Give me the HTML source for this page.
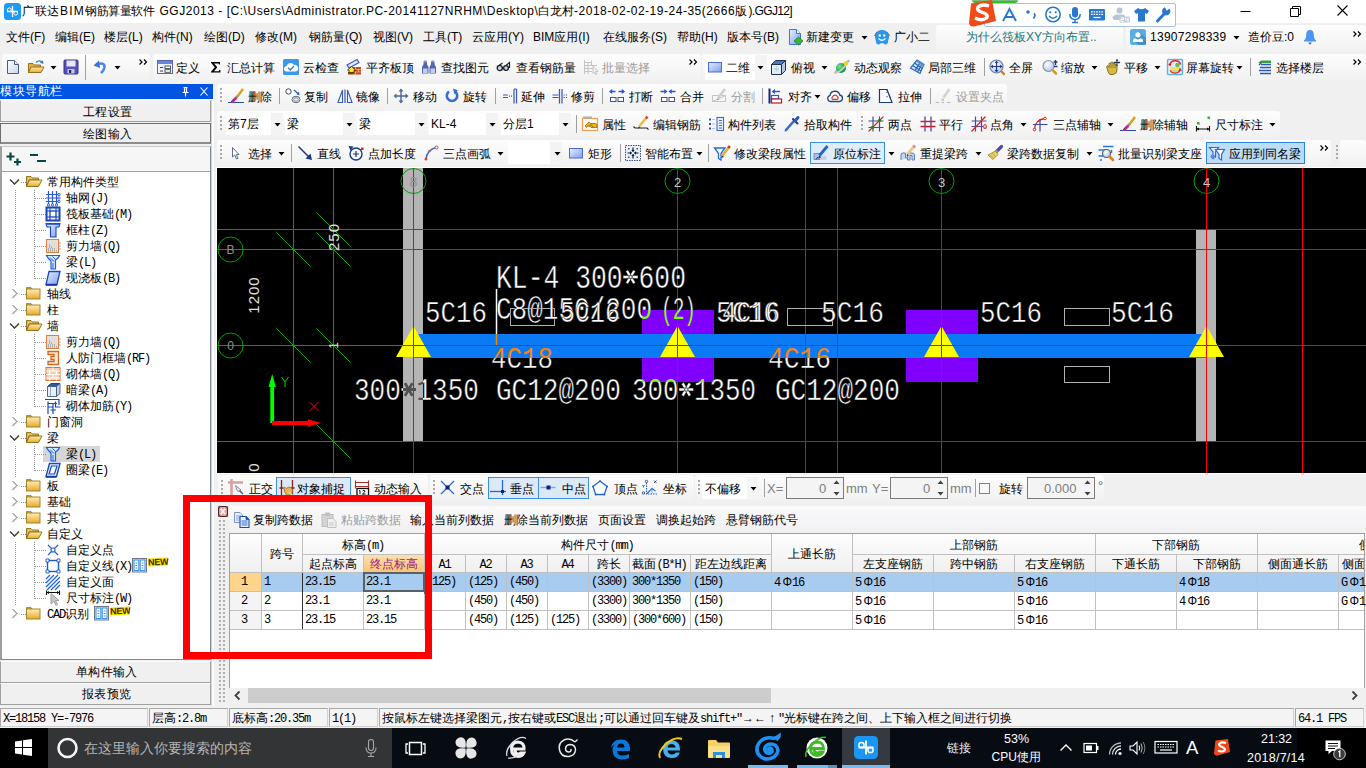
<!DOCTYPE html>
<html><head><meta charset="utf-8"><title>GGJ2013</title><style>
html,body{margin:0;padding:0}
body{width:1366px;height:768px;overflow:hidden;position:relative;background:#f0f0f0;font-family:"Liberation Sans",sans-serif;font-size:12px;color:#000}
.a{position:absolute;box-sizing:border-box}
.t{position:absolute;white-space:nowrap;font-size:12px;line-height:16px;color:#000}
.s{position:absolute;white-space:nowrap;font-size:12px;line-height:16px;color:#000;font-family:"Liberation Sans",sans-serif}
.m{position:absolute;white-space:nowrap;font-size:12px;line-height:16px;color:#000;font-family:"Liberation Mono",monospace;letter-spacing:-1.2px}
.c{position:absolute;white-space:nowrap;color:#fff;font-family:"Liberation Mono",monospace;transform-origin:0 0;line-height:1}
svg{overflow:visible}
i{display:inline-block;font-style:normal;white-space:nowrap}
.s b{font-weight:normal;font-family:"Liberation Mono",monospace;font-size:12px;letter-spacing:-1.2px}
</style></head><body>
<svg width="0" height="0" style="position:absolute"><defs>
<linearGradient id="gb" x1="0" y1="0" x2="1" y2="1"><stop offset="0" stop-color="#e8f0ff"/><stop offset="1" stop-color="#7c9cf0"/></linearGradient>
<linearGradient id="gp" x1="0" y1="0" x2="1" y2="1"><stop offset="0" stop-color="#ffffff"/><stop offset="1" stop-color="#c8d4ec"/></linearGradient>
<linearGradient id="gf" x1="0" y1="0" x2="0" y2="1"><stop offset="0" stop-color="#fff0b0"/><stop offset="1" stop-color="#e8a830"/></linearGradient>
<radialGradient id="gl" cx="0.4" cy="0.35" r="0.7"><stop offset="0" stop-color="#ffffff"/><stop offset="1" stop-color="#a8c4f0"/></radialGradient>
<radialGradient id="gg" cx="0.35" cy="0.35" r="0.7"><stop offset="0" stop-color="#70e890"/><stop offset="1" stop-color="#108838"/></radialGradient>
</defs></svg>
<div class="a" style="left:0px;top:0px;width:1366px;height:23px;background:#fff"></div>
<svg class="a" style="left:4px;top:3px" width="17" height="17" viewBox="0 0 17 17"><rect x="0" y="0" width="17" height="17" rx="3.5" fill="#1a9bfc"/><path d="M8.5 3V14M3 8.5H14" stroke="#fff" stroke-width="1.3" fill="none"/><circle cx="5.3" cy="6.8" r="1.9" fill="none" stroke="#fff" stroke-width="1"/><circle cx="11.7" cy="10.2" r="1.9" fill="none" stroke="#fff" stroke-width="1"/></svg>
<span class="t" style="left:22px;top:3px;letter-spacing:0.5px"><i style="width:36px">广联达</i></span>
<span class="t" style="left:60px;top:3px;;letter-spacing:1.22px">BIM</span>
<span class="t" style="left:85px;top:3px;letter-spacing:-0.4px"><i style="width:72px">钢筋算量软件</i></span>
<span class="t" style="left:159.5px;top:3px;;letter-spacing:0.52px">GGJ2013 - [C:\Users\Administrator.PC-20141127NRHM\Desktop\</span>
<span class="t" style="left:538px;top:3px;"><i style="width:36px">白龙村</i></span>
<span class="t" style="left:574px;top:3px;;letter-spacing:0.52px">-2018-02-02-19-24-35(2666</span>
<span class="t" style="left:735px;top:3px;"><i style="width:12px">版</i></span>
<span class="t" style="left:748.5px;top:3px;;letter-spacing:-0.65px">).GGJ12]</span>
<svg class="a" style="left:1235px;top:0" width="131" height="23" viewBox="0 0 131 23"><path d="M5.5 11.5H15.5" stroke="#000" stroke-width="1" fill="none"/><path d="M55.5 8.5H63.5V16.5H55.5Z M57.5 8.5V6.5H65.5V14.5H63.5" stroke="#000" stroke-width="1" fill="none"/><path d="M102.5 5.5L112.5 15.5M112.5 5.5L102.5 15.5" stroke="#000" stroke-width="1.1" fill="none"/></svg>
<div class="a" style="left:0px;top:23px;width:1366px;height:30px;background:#f0f0f0"></div>
<span class="t" style="left:6px;top:29px;"><i style="width:24px">文件</i>(F)</span>
<span class="t" style="left:55px;top:29px;"><i style="width:24px">编辑</i>(E)</span>
<span class="t" style="left:104px;top:29px;"><i style="width:24px">楼层</i>(L)</span>
<span class="t" style="left:152px;top:29px;"><i style="width:24px">构件</i>(N)</span>
<span class="t" style="left:204px;top:29px;"><i style="width:24px">绘图</i>(D)</span>
<span class="t" style="left:255px;top:29px;"><i style="width:24px">修改</i>(M)</span>
<span class="t" style="left:309px;top:29px;"><i style="width:36px">钢筋量</i>(Q)</span>
<span class="t" style="left:373px;top:29px;"><i style="width:24px">视图</i>(V)</span>
<span class="t" style="left:423px;top:29px;"><i style="width:24px">工具</i>(T)</span>
<span class="t" style="left:472px;top:29px;"><i style="width:36px">云应用</i>(Y)</span>
<span class="t" style="left:533px;top:29px;">BIM<i style="width:24px">应用</i>(I)</span>
<span class="t" style="left:603px;top:29px;"><i style="width:48px">在线服务</i>(S)</span>
<span class="t" style="left:677px;top:29px;"><i style="width:24px">帮助</i>(H)</span>
<span class="t" style="left:727px;top:29px;"><i style="width:36px">版本号</i>(B)</span>
<svg class="a" style="left:788px;top:29px" width="16" height="16" viewBox="0 0 16 16"><path d="M1.5 0.5H8.5L12.5 4.5V15.5H1.5Z" fill="url(#gb)" stroke="#3a78d8"/><path d="M8.5 0.5V4.5H12.5" fill="#fff" stroke="#3a78d8"/><path d="M10.5 8L15 12L10.5 16L6 12Z" fill="#38b838" stroke="#208020" stroke-width="0.8"/></svg>
<span class="t" style="left:806px;top:29px;"><i style="width:48px">新建变更</i></span>
<svg class="a" style="left:861px;top:36px" width="7" height="4" viewBox="0 0 7 4"><path d="M0.5 0H6.5L3.5 3.5Z" fill="#000"/></svg>
<svg class="a" style="left:874px;top:29px" width="16" height="16" viewBox="0 0 16 16"><path d="M8 1C12 1 15 3.5 15 7.5C15 10 14 11 14 12.5C14 14.5 13 15.5 11.5 15.5C10 15.5 10 14 8 14C6 14 6 15.5 4.5 15.5C3 15.5 2 14.5 2 12.5C2 11 1 10 1 7.5C1 3.5 4 1 8 1Z" fill="#2a96ee"/><path d="M0.5 7Q1.5 4 3 3.5M15.5 7Q14.5 4 13 3.5" stroke="#606870" stroke-width="1" fill="none"/><circle cx="5.8" cy="6.5" r="1.2" fill="#fff"/><circle cx="10.2" cy="6.5" r="1.2" fill="#fff"/><path d="M4.5 9.5Q8 13 11.5 9.5" stroke="#fff" stroke-width="1.2" fill="none"/></svg>
<span class="t" style="left:894px;top:29px;"><i style="width:36px">广小二</i></span>
<div class="a" style="left:936px;top:25px;width:187px;height:27px;background:linear-gradient(#fdfdfd,#f1f1f1);border-radius:3px"></div>
<div class="a" style="left:1126px;top:25px;width:240px;height:27px;background:linear-gradient(#fdfdfd,#f1f1f1);border-radius:3px"></div>
<span class="t" style="left:966px;top:29px;color:#167a80"><i style="width:60px">为什么筏板</i>XY<i style="width:48px">方向布置</i>..</span>
<svg class="a" style="left:1130px;top:29px" width="16" height="16" viewBox="0 0 16 16"><rect x="0" y="0" width="16" height="16" rx="2.5" fill="#5aaee4"/><path d="M7 9L16 16V12Z" fill="#3a88c4"/><path d="M9 2L16 9V13.5A2.5 2.5 0 0 1 13.5 16H9L4 12Z" fill="#3f8cc8" opacity="0.8"/><circle cx="8" cy="5.8" r="2.6" fill="#fff"/><path d="M3 13V11.5Q3 9.5 5.5 9.3Q8 11.5 10.5 9.3Q13 9.5 13 11.5V13Z" fill="#fff"/></svg>
<span class="t" style="left:1150px;top:29px;;letter-spacing:0.28px">13907298339</span>
<svg class="a" style="left:1233px;top:36px" width="7" height="4" viewBox="0 0 7 4"><path d="M0.5 0H6.5L3.5 3.5Z" fill="#000"/></svg>
<span class="t" style="left:1248px;top:29px;"><i style="width:36px">造价豆</i>:0</span>
<svg class="a" style="left:1302px;top:29px" width="16" height="16" viewBox="0 0 16 16"><path d="M8 1C10.8 1 11.8 3.2 11.8 6C11.8 9 12.5 10 14 11.5V12.5H2V11.5C3.5 10 4.2 9 4.2 6C4.2 3.2 5.2 1 8 1Z" fill="#4a94f4"/><path d="M6 13.5H10L8 15.8Z" fill="#2a70d8"/></svg>
<svg class="a" style="left:1353px;top:31px" width="9" height="6" viewBox="0 0 9 6"><path d="M0.5 0.5L3 3L0.5 5.5M5 0.5L7.5 3L5 5.5" stroke="#000" stroke-width="1.2" fill="none"/></svg>
<div class="a" style="left:984px;top:3px;width:192px;height:24px;background:#fff;border:1px solid #aac0dc;border-radius:2px"></div>
<svg class="a" style="left:0;top:0" width="1366" height="30" viewBox="0 0 1366 30"><path d="M972 0Q972 3.5 977 3.5H1013Q1018 3.5 1018 0Z" fill="#30c030" stroke="#c0c0c0" stroke-width="1"/><path d="M971 3.5L992 0L996 21L974 26.5Q969.5 27 969 23Z" fill="#f04a18"/><path d="M989 6Q982 3.5 978 7Q976 10.5 982.5 12.5Q989 14.5 986.5 18Q982 21.5 975 18" stroke="#fff" stroke-width="3.4" fill="none"/><path d="M1003 21L1009.5 9L1016 21M1005.5 17H1013.5" stroke="#2878d0" stroke-width="1.9" fill="none"/><circle cx="1028" cy="12" r="1.8" fill="#2878d0"/><path d="M1034 13.5Q1036 15 1033.5 18.5" stroke="#2878d0" stroke-width="1.8" fill="none"/><circle cx="1053" cy="14.5" r="7.2" fill="none" stroke="#2878d0" stroke-width="1.6"/><circle cx="1050.3" cy="12.3" r="1.1" fill="#2878d0"/><circle cx="1055.7" cy="12.3" r="1.1" fill="#2878d0"/><path d="M1049 16Q1053 20.5 1057 16" stroke="#2878d0" stroke-width="1.4" fill="none"/><rect x="1072" y="7" width="6" height="10.5" rx="3" fill="#2878d0"/><path d="M1069.8 14Q1070 19.5 1075 19.5Q1080 19.5 1080.2 14M1075 19.5V22.5M1072 22.5H1078" stroke="#2878d0" stroke-width="1.5" fill="none"/><rect x="1089" y="9" width="16" height="11.5" rx="1.2" fill="#2878d0"/><path d="M1091 11.8H1103M1091 14.3H1103" stroke="#fff" stroke-width="1.3" stroke-dasharray="1.6 1"/><path d="M1093.5 17.5H1100.5" stroke="#fff" stroke-width="1.3"/><circle cx="1119.5" cy="10.5" r="3" fill="#b8c4d4"/><path d="M1113.5 20V18Q1113.5 14.5 1117 14.5H1122Q1125.5 14.5 1125.5 18V20Z" fill="#b8c4d4"/><path d="M1112 17.5L1115 15V20Z" fill="#b8c4d4"/><rect x="1119.5" y="16.5" width="10.5" height="6" rx="1" fill="#c4ccd8"/><path d="M1121 18H1123.5V19.5H1121V21.5H1124M1125.5 17.5V20H1128.5M1128 17.5V22" stroke="#fff" stroke-width="0.9" fill="none"/><path d="M1138 8L1134 11L1136 14L1138 13V21.5H1145V13L1147 14L1149 11L1145 8Q1141.5 10.5 1138 8Z" fill="#2878d0"/><path d="M1157.5 21L1165.5 12.5" stroke="#2878d0" stroke-width="3" stroke-linecap="round"/><path d="M1169.5 8.5A4.2 4.2 0 1 1 1164.8 7.2L1166.8 10.8L1169.5 8.5Z" fill="#2878d0"/></svg>
<div class="a" style="left:2px;top:54px;width:148px;height:27px;background:linear-gradient(#fdfdfd,#f1f1f1);border-radius:3px"></div>
<svg class="a" style="left:5px;top:59px" width="16" height="16" viewBox="0 0 16 16"><path d="M2.5 1.5H9.5L13.5 5.5V14.5H2.5Z" fill="url(#gp)" stroke="#4a5a80"/><path d="M9.5 1.5V5.5H13.5" fill="#e8ecf8" stroke="#4a5a80"/></svg>
<svg class="a" style="left:27px;top:59px" width="18" height="16" viewBox="0 0 18 16"><path d="M1.5 4.5H6L7.5 6H13.5V13.5H1.5Z" fill="#e0b040" stroke="#987018"/><path d="M1.5 13.5L4 8H17L14 13.5Z" fill="url(#gf)" stroke="#987018"/><path d="M9 3.5Q12 0.5 15 3" stroke="#3a78c8" stroke-width="1.4" fill="none"/><path d="M16.5 5L16 1.5L12.8 3.5Z" fill="#3a78c8"/></svg>
<svg class="a" style="left:50px;top:66px" width="7" height="4" viewBox="0 0 7 4"><path d="M0.5 0H6.5L3.5 3.5Z" fill="#000"/></svg>
<svg class="a" style="left:63px;top:59px" width="16" height="16" viewBox="0 0 16 16"><rect x="1" y="1" width="14" height="14" rx="1" fill="#5450c0" stroke="#34308c"/><rect x="3.5" y="1.5" width="9" height="6" fill="#e8e8f8"/><rect x="4.5" y="10" width="7" height="4.5" fill="#c4c4d4"/><rect x="6" y="11" width="2.2" height="3" fill="#282858"/></svg>
<div class="a" style="left:85px;top:55px;width:1px;height:25px;background:#a0a0a0"></div>
<svg class="a" style="left:92px;top:59px" width="16" height="16" viewBox="0 0 16 16"><path d="M6 5Q13.5 3 12.3 9Q11.6 12 9 14" stroke="#4a86e4" stroke-width="2.6" fill="none"/><path d="M1.5 6.5L7 1.5L8 9Z" fill="#3a72d8"/></svg>
<svg class="a" style="left:114px;top:66px" width="7" height="4" viewBox="0 0 7 4"><path d="M0.5 0H6.5L3.5 3.5Z" fill="#000"/></svg>
<svg class="a" style="left:139px;top:59px" width="9" height="6" viewBox="0 0 9 6"><path d="M0.5 0.5L3 3L0.5 5.5M5 0.5L7.5 3L5 5.5" stroke="#000" stroke-width="1.2" fill="none"/></svg>
<div class="a" style="left:153px;top:54px;width:548px;height:27px;background:linear-gradient(#fdfdfd,#f1f1f1);border-radius:3px"></div>
<svg class="a" style="left:157px;top:59px" width="16" height="16" viewBox="0 0 16 16"><rect x="0.5" y="1.5" width="15" height="13" fill="#eef2fc" stroke="#5a6ab0"/><rect x="1" y="2" width="14" height="3" fill="#6a84dc"/><path d="M3 8.5H6M3 12H6" stroke="#404040" stroke-width="1"/><rect x="8" y="7" width="5.5" height="2.6" fill="#fff" stroke="#484848" stroke-width="0.9"/><rect x="8" y="10.7" width="5.5" height="2.6" fill="#fff" stroke="#484848" stroke-width="0.9"/></svg>
<span class="t" style="left:176px;top:60px;"><i style="width:24px">定义</i></span>
<svg class="a" style="left:208px;top:59px" width="16" height="16" viewBox="0 0 16 16"><path d="M3 3H12V5.5H11L10.6 4.4H6L9.3 8.3L6 12.2H10.8L11.4 11H12.4V13.6H3V12.8L6.8 8.3L3 3.8Z" fill="#000"/></svg>
<span class="t" style="left:227px;top:60px;"><i style="width:48px">汇总计算</i></span>
<svg class="a" style="left:283px;top:59px" width="16" height="16" viewBox="0 0 16 16"><rect x="0" y="0" width="16" height="16" rx="1.5" fill="#3a98ea"/><path d="M3 12.5A2.8 2.8 0 0 1 3.6 7A4 4 0 0 1 11 6A3.3 3.3 0 0 1 12.6 12.5Z" fill="#fff"/><path d="M5 8.8L7.2 11L11 7" stroke="#3a7ad0" stroke-width="1.3" fill="none"/></svg>
<span class="t" style="left:303px;top:60px;"><i style="width:36px">云检查</i></span>
<svg class="a" style="left:346px;top:59px" width="16" height="16" viewBox="0 0 16 16"><path d="M1 6L11 0.5L13 3.5L3 9Z" fill="#e0e8fc" stroke="#3a5ac8" stroke-width="1.2"/><rect x="7" y="8" width="8" height="7.5" fill="#c84820"/><path d="M7 10.5H15M7 13H15M9.5 8V10.5M12.5 10.5V13M9.5 13V15.5" stroke="#f0c0a0" stroke-width="0.7"/><rect x="2" y="13" width="5" height="2.5" fill="#a83010"/><path d="M1.5 11L5.5 7.5L9.5 11H8V13.5H3V11Z" fill="#f8e820" stroke="#303000" stroke-width="0.8"/></svg>
<span class="t" style="left:366px;top:60px;"><i style="width:48px">平齐板顶</i></span>
<svg class="a" style="left:421px;top:59px" width="16" height="16" viewBox="0 0 16 16"><path d="M2.5 2.5H6V5.5L7.5 8V14.5H1V8L2.5 5.5Z" fill="#5464b0"/><path d="M10 2.5H13.5V5.5L15 8V14.5H8.5V8L10 5.5Z" fill="#5464b0"/><rect x="2" y="9.5" width="4.5" height="4.5" fill="#c4ccec"/><rect x="9.5" y="9.5" width="4.5" height="4.5" fill="#c4ccec"/><rect x="3" y="1.5" width="2.5" height="2" fill="#8490cc"/><rect x="10.5" y="1.5" width="2.5" height="2" fill="#8490cc"/></svg>
<span class="t" style="left:441px;top:60px;"><i style="width:48px">查找图元</i></span>
<svg class="a" style="left:496px;top:59px" width="16" height="16" viewBox="0 0 16 16"><circle cx="3.8" cy="9" r="2.6" fill="#b8d0f0" stroke="#202020" stroke-width="1.3"/><circle cx="10" cy="9" r="2.4" fill="#b8d0f0" stroke="#202020" stroke-width="1.3"/><path d="M3 6.5L6.5 4M10 6.5L13.5 3.5V9" stroke="#202020" stroke-width="1.2" fill="none"/></svg>
<span class="t" style="left:516px;top:60px;"><i style="width:60px">查看钢筋量</i></span>
<svg class="a" style="left:583px;top:59px" width="16" height="16" viewBox="0 0 16 16"><path d="M1.5 1V15M1.5 3.5H8M1.5 6.5H14M1.5 9.5H10M1.5 12.5H9M5 3.5V15M8.5 1.5V6.5" stroke="#c4c4c4" stroke-width="1" fill="none"/><path d="M10 7L15 12.5H12.5L14 15L12.5 15.5L11.5 13L10 14.5Z" fill="#f4f4f4" stroke="#c0c0c0" stroke-width="0.9"/></svg>
<span class="t" style="left:602px;top:60px;color:#9a9a9a"><i style="width:48px">批量选择</i></span>
<svg class="a" style="left:689px;top:59px" width="9" height="6" viewBox="0 0 9 6"><path d="M0.5 0.5L3 3L0.5 5.5M5 0.5L7.5 3L5 5.5" stroke="#000" stroke-width="1.2" fill="none"/></svg>
<div class="a" style="left:702px;top:54px;width:664px;height:27px;background:linear-gradient(#fdfdfd,#f1f1f1);border-radius:3px"></div>
<div class="a" style="left:705px;top:55px;width:50px;height:25px;background:#fff"></div>
<div class="a" style="left:755px;top:55px;width:12px;height:25px;background:#f4f4f4"></div>
<svg class="a" style="left:707px;top:59px" width="16" height="16" viewBox="0 0 16 16"><rect x="1.5" y="3.5" width="13" height="9.5" fill="url(#gb)" stroke="#4a68d8"/></svg>
<span class="t" style="left:726px;top:60px;"><i style="width:24px">二维</i></span>
<svg class="a" style="left:757px;top:66px" width="7" height="4" viewBox="0 0 7 4"><path d="M0.5 0H6.5L3.5 3.5Z" fill="#000"/></svg>
<svg class="a" style="left:770px;top:59px" width="16" height="16" viewBox="0 0 16 16"><path d="M1.5 5.5L5.5 1.5H15.5L11.5 5.5Z" fill="#4a78b8" stroke="#203050"/><path d="M1.5 5.5H11.5V15.5H1.5Z" fill="#e4ecf8" stroke="#203050"/><path d="M11.5 5.5L15.5 1.5V11.5L11.5 15.5Z" fill="#b0c8e8" stroke="#203050"/><path d="M4 10H9M6.5 7.5V12.5" stroke="#c0d0e8" stroke-width="1.4"/></svg>
<span class="t" style="left:791px;top:60px;"><i style="width:24px">俯视</i></span>
<svg class="a" style="left:821px;top:66px" width="7" height="4" viewBox="0 0 7 4"><path d="M0.5 0H6.5L3.5 3.5Z" fill="#000"/></svg>
<svg class="a" style="left:834px;top:59px" width="16" height="16" viewBox="0 0 16 16"><path d="M1 14.5Q4 8 15.5 1.5" stroke="#b0b8c0" stroke-width="2.4" fill="none"/><circle cx="7" cy="9" r="5" fill="url(#gg)"/><path d="M1.5 14Q7 12.5 12 6" stroke="#c8d0d8" stroke-width="1.6" fill="none"/><circle cx="12" cy="4.5" r="2.2" fill="#f0d820"/></svg>
<span class="t" style="left:854px;top:60px;"><i style="width:48px">动态观察</i></span>
<svg class="a" style="left:909px;top:59px" width="16" height="16" viewBox="0 0 16 16"><path d="M8 1L15 5.5L11 14.5L1.5 9Z" fill="#dce8f8" stroke="#2a68b8" stroke-width="1.2"/><path d="M5.5 4L13.3 9.5M3.5 6.5L12 12M11.5 3.2L6 11.7M13.3 4.5L8.5 13" stroke="#2a68b8" stroke-width="1.3"/><path d="M8 1L15 5.5L14.5 7.5L7.5 3Z" fill="#5a90d0"/></svg>
<span class="t" style="left:928px;top:60px;"><i style="width:48px">局部三维</i></span>
<div class="a" style="left:984px;top:58px;width:1px;height:18px;background:#a0a0a0"></div>
<svg class="a" style="left:989px;top:59px" width="16" height="16" viewBox="0 0 16 16"><circle cx="7.5" cy="7.5" r="6.5" fill="url(#gl)" stroke="#7080a0" stroke-width="1.2"/><path d="M7.5 2.5V12.5M2.5 7.5H12.5" stroke="#203880" stroke-width="1.2"/><path d="M7.5 1.5L9.3 4H5.7ZM7.5 13.5L9.3 11H5.7ZM1.5 7.5L4 5.7V9.3ZM13.5 7.5L11 5.7V9.3Z" fill="#203880"/><path d="M12.5 12.5L15 15" stroke="#d07820" stroke-width="2.4" stroke-linecap="round"/></svg>
<span class="t" style="left:1009px;top:60px;"><i style="width:24px">全屏</i></span>
<svg class="a" style="left:1042px;top:59px" width="16" height="16" viewBox="0 0 16 16"><circle cx="6.5" cy="7" r="5.5" fill="url(#gl)" stroke="#8090a8" stroke-width="1.2"/><path d="M10.5 11L14 14.5" stroke="#d0a030" stroke-width="2.6" stroke-linecap="round"/><path d="M13.5 1V6M11.5 3H15.5M12 7.5H15.5" stroke="#203880" stroke-width="1.4"/></svg>
<span class="t" style="left:1061px;top:60px;"><i style="width:24px">缩放</i></span>
<svg class="a" style="left:1091px;top:66px" width="7" height="4" viewBox="0 0 7 4"><path d="M0.5 0H6.5L3.5 3.5Z" fill="#000"/></svg>
<svg class="a" style="left:1105px;top:59px" width="16" height="16" viewBox="0 0 16 16"><path d="M2 9Q1 7 2.5 6.5L4 8.5V4.5Q5 3.5 6 4.5V3.5Q7 2.5 8 3.5V4.5Q9 3.5 10 4.5V6Q11 5 12 6V11Q12 15 8 15.5H5Q3 14 2 9Z" fill="#d8b848" stroke="#806818" stroke-width="0.9"/><path d="M6 5V9M8 4.5V9M10 5.5V9" stroke="#806818" stroke-width="0.7"/><path d="M12 0.5V7M9 3.5H15" stroke="#203050" stroke-width="1.1"/><path d="M12 0L13.3 1.8H10.7ZM15.5 3.5L13.7 2.2V4.8ZM8.5 3.5L10.3 2.2V4.8Z" fill="#203050"/></svg>
<span class="t" style="left:1124px;top:60px;"><i style="width:24px">平移</i></span>
<svg class="a" style="left:1154px;top:66px" width="7" height="4" viewBox="0 0 7 4"><path d="M0.5 0H6.5L3.5 3.5Z" fill="#000"/></svg>
<svg class="a" style="left:1167px;top:59px" width="16" height="16" viewBox="0 0 16 16"><rect x="0.5" y="0.5" width="15" height="15" rx="1" fill="#e4f2fc" stroke="#5ab4e8" stroke-width="1.4"/><rect x="3" y="8" width="10" height="3" fill="#f0e060"/><circle cx="10.5" cy="6" r="2.3" fill="#70c040"/><rect x="3" y="11" width="10" height="2.5" fill="#b8e0a0"/><path d="M2.5 6A6 6 0 0 1 13.8 5.5M13.5 10.5A6 6 0 0 1 3 11.5" stroke="#f02020" stroke-width="1.3" fill="none"/><path d="M1 5L3.2 7.6L4.6 4.4ZM15 11.5L12.8 8.6L11.6 12Z" fill="#f02020"/></svg>
<span class="t" style="left:1186px;top:60px;"><i style="width:48px">屏幕旋转</i></span>
<svg class="a" style="left:1236px;top:66px" width="7" height="4" viewBox="0 0 7 4"><path d="M0.5 0H6.5L3.5 3.5Z" fill="#000"/></svg>
<div class="a" style="left:1250px;top:58px;width:1px;height:18px;background:#a0a0a0"></div>
<svg class="a" style="left:1257px;top:59px" width="16" height="16" viewBox="0 0 16 16"><path d="M4 1.5L14 1.5L14 4L1 4Z" fill="#3c9c3c"/><path d="M4 5.5H14M3 8.5H14M2 11.5H14M3 14.5H14" stroke="#2858b8" stroke-width="1.7"/><path d="M2 6L4.5 3.5" stroke="#2858b8" stroke-width="1.2"/></svg>
<span class="t" style="left:1276px;top:60px;"><i style="width:48px">选择楼层</i></span>
<svg class="a" style="left:1353px;top:59px" width="9" height="6" viewBox="0 0 9 6"><path d="M0.5 0.5L3 3L0.5 5.5M5 0.5L7.5 3L5 5.5" stroke="#000" stroke-width="1.2" fill="none"/></svg>
<div class="a" style="left:217px;top:84px;width:790px;height:24px;background:linear-gradient(#fdfdfd,#f1f1f1);border-radius:3px"></div>
<div class="a" style="left:220px;top:88px;width:2px;height:16px;background:repeating-linear-gradient(#a8a8a8 0 2px,transparent 2px 4px)"></div>
<svg class="a" style="left:228px;top:88px" width="16" height="16" viewBox="0 0 16 16"><path d="M0 14.5H16" stroke="#2a4a9a" stroke-width="1"/><path d="M15 1L9 9" stroke="#d8a010" stroke-width="2.4"/><path d="M9.5 8L7 11" stroke="#8890a0" stroke-width="2.6"/><path d="M7.5 10.5L4.5 13.5" stroke="#d02880" stroke-width="2.8" stroke-linecap="round"/><path d="M3 14L6 11" stroke="#404060" stroke-width="0.8"/></svg>
<span class="t" style="left:248px;top:89px;"><i style="width:24px">删除</i></span>
<svg class="a" style="left:285px;top:88px" width="16" height="16" viewBox="0 0 16 16"><circle cx="3.5" cy="3.5" r="2.7" fill="#fff" stroke="#404858" stroke-width="1"/><ellipse cx="11" cy="11.5" rx="4" ry="3.2" fill="#fff" stroke="#606878" stroke-width="1"/><ellipse cx="11" cy="11.5" rx="2.3" ry="1.7" fill="none" stroke="#606878" stroke-width="0.9"/><path d="M9 2L13.5 6" stroke="#2858b8" stroke-width="1.2"/><path d="M14.5 7.2L14 3.8L11.5 6.3Z" fill="#2858b8"/></svg>
<span class="t" style="left:304px;top:89px;"><i style="width:24px">复制</i></span>
<svg class="a" style="left:337px;top:88px" width="16" height="16" viewBox="0 0 16 16"><path d="M1 14.5L5.5 2V14.5Z M10.5 2L15 14.5H10.5Z" fill="#f4f8ff" stroke="#3858b8" stroke-width="1.1"/><path d="M8 1.5V15" stroke="#3858b8" stroke-width="1.2"/></svg>
<span class="t" style="left:356px;top:89px;"><i style="width:24px">镜像</i></span>
<svg class="a" style="left:393px;top:88px" width="16" height="16" viewBox="0 0 16 16"><path d="M8 2V14M2 8H14" stroke="#4a6898" stroke-width="1.4"/><path d="M8 0.5L10.5 3.5H5.5ZM8 15.5L10.5 12.5H5.5ZM0.5 8L3.5 5.5V10.5ZM15.5 8L12.5 5.5V10.5Z" fill="#4a6898"/></svg>
<span class="t" style="left:413px;top:89px;"><i style="width:24px">移动</i></span>
<svg class="a" style="left:444px;top:88px" width="16" height="16" viewBox="0 0 16 16"><path d="M5 3.5A5.2 5.2 0 1 0 11 3.5" stroke="#3a6cd4" stroke-width="2.6" fill="none"/><path d="M9 0.5L13.8 2.2L10.5 6.5Z" fill="#3a6cd4"/></svg>
<span class="t" style="left:463px;top:89px;"><i style="width:24px">旋转</i></span>
<svg class="a" style="left:502px;top:88px" width="16" height="16" viewBox="0 0 16 16"><path d="M1 7H6M1 9.5H6" stroke="#3858b8" stroke-width="1.2"/><path d="M7 8.2H10.5" stroke="#3858b8" stroke-width="1.2" stroke-dasharray="1 1"/><path d="M12 1V15.5M14.5 1V15.5M12 1H14.5" stroke="#3858b8" stroke-width="1.2" fill="none"/></svg>
<span class="t" style="left:521px;top:89px;"><i style="width:24px">延伸</i></span>
<svg class="a" style="left:552px;top:88px" width="16" height="16" viewBox="0 0 16 16"><path d="M0.5 7H6.5M0.5 9.5H6.5" stroke="#3858b8" stroke-width="1.2"/><path d="M7.5 1V15.5M10 1V15.5" stroke="#3858b8" stroke-width="1.2"/><path d="M11.5 7H15M11.5 9.5H15" stroke="#3858b8" stroke-width="1.2" stroke-dasharray="1.2 1.2"/></svg>
<span class="t" style="left:571px;top:89px;"><i style="width:24px">修剪</i></span>
<svg class="a" style="left:609px;top:88px" width="16" height="16" viewBox="0 0 16 16"><path d="M1 3.5H6.5M9.5 3.5H15" stroke="#2858c8" stroke-width="1.3"/><path d="M0 3.5L3.2 1V6ZM16 3.5L12.8 1V6Z" fill="#2858c8"/><rect x="1.5" y="9.5" width="5.5" height="4" fill="#fff" stroke="#405088"/><rect x="9" y="9.5" width="5.5" height="4" fill="#fff" stroke="#405088"/></svg>
<span class="t" style="left:629px;top:89px;"><i style="width:24px">打断</i></span>
<svg class="a" style="left:660px;top:88px" width="16" height="16" viewBox="0 0 16 16"><path d="M0.5 3.5H5M11 3.5H15.5" stroke="#2858c8" stroke-width="1.3"/><path d="M7.5 3.5L4.3 1V6ZM8.5 3.5L11.7 1V6Z" fill="#2858c8"/><rect x="1.5" y="9.5" width="5.5" height="4" fill="#fff" stroke="#405088"/><rect x="9" y="9.5" width="5.5" height="4" fill="#fff" stroke="#405088"/></svg>
<span class="t" style="left:680px;top:89px;"><i style="width:24px">合并</i></span>
<svg class="a" style="left:711px;top:88px" width="16" height="16" viewBox="0 0 16 16"><path d="M1.5 7.5H14.5V13.5H1.5ZM1.5 13.5L14.5 7.5" fill="none" stroke="#c4c4c4" stroke-width="1"/><path d="M14 1L7 10" stroke="#d0d0d0" stroke-width="2.8"/><path d="M7 10L5.8 12.5L8.3 11.5Z" fill="#a0a0a0"/></svg>
<span class="t" style="left:731px;top:89px;color:#9a9a9a"><i style="width:24px">分割</i></span>
<svg class="a" style="left:768px;top:88px" width="16" height="16" viewBox="0 0 16 16"><path d="M1.5 0.5V15.5" stroke="#102878" stroke-width="2"/><path d="M5 3.5H12" stroke="#2858d8" stroke-width="1.4"/><path d="M3.5 3.5L7 1V6Z" fill="#2858d8"/><rect x="3.5" y="7.5" width="7" height="3.5" fill="#fff" stroke="#2858d8" stroke-width="1.2"/><rect x="3.5" y="11" width="10" height="4" fill="#fff" stroke="#c01818" stroke-width="1.2"/></svg>
<span class="t" style="left:788px;top:89px;"><i style="width:24px">对齐</i></span>
<svg class="a" style="left:827px;top:88px" width="16" height="16" viewBox="0 0 16 16"><path d="M3.5 13.5A3 3 0 0 1 3 7.6A5 5 0 0 1 12.8 7A3.3 3.3 0 0 1 12.5 13.5Z" fill="#fff" stroke="#1a4a80" stroke-width="1.3"/><path d="M5.5 11.3A1.4 1.4 0 0 1 5.8 8.8A2.4 2.4 0 0 1 10.3 8.6A1.5 1.5 0 0 1 10.3 11.3Z" fill="#fff" stroke="#e03030" stroke-width="1.2"/></svg>
<span class="t" style="left:847px;top:89px;"><i style="width:24px">偏移</i></span>
<svg class="a" style="left:878px;top:88px" width="16" height="16" viewBox="0 0 16 16"><path d="M1.5 1.5H9L14 14.5H1.5Z" fill="#fff" stroke="#183878" stroke-width="1.2"/><path d="M9 1.5V6M9 8V10M11 6.5L12.5 10" stroke="#183878" stroke-width="1" stroke-dasharray="1.2 1.2"/></svg>
<span class="t" style="left:898px;top:89px;"><i style="width:24px">拉伸</i></span>
<svg class="a" style="left:935px;top:88px" width="16" height="16" viewBox="0 0 16 16"><path d="M0.5 14.5H4M6.5 14.5H9M12 14.5H15.5" stroke="#b8b8b8" stroke-width="1.2"/><rect x="6.5" y="10.5" width="2.5" height="2.5" fill="#c8c8c8"/><path d="M14.5 1L8.5 9.5" stroke="#d4d4d4" stroke-width="2.8"/></svg>
<span class="t" style="left:956px;top:89px;color:#9a9a9a"><i style="width:48px">设置夹点</i></span>
<div class="a" style="left:279px;top:88px;width:1px;height:16px;background:#a0a0a0"></div>
<div class="a" style="left:387px;top:88px;width:1px;height:16px;background:#a0a0a0"></div>
<div class="a" style="left:495px;top:88px;width:1px;height:16px;background:#a0a0a0"></div>
<div class="a" style="left:602px;top:88px;width:1px;height:16px;background:#a0a0a0"></div>
<div class="a" style="left:762px;top:88px;width:1px;height:16px;background:#a0a0a0"></div>
<div class="a" style="left:930px;top:88px;width:1px;height:16px;background:#a0a0a0"></div>
<svg class="a" style="left:814px;top:95px" width="7" height="4" viewBox="0 0 7 4"><path d="M0.5 0H6.5L3.5 3.5Z" fill="#000"/></svg>
<div class="a" style="left:217px;top:111px;width:640px;height:26px;background:linear-gradient(#fdfdfd,#f1f1f1);border-radius:3px"></div>
<div class="a" style="left:220px;top:116px;width:2px;height:16px;background:repeating-linear-gradient(#a8a8a8 0 2px,transparent 2px 4px)"></div>
<div class="a" style="left:226px;top:113px;width:57px;height:22px;background:#fff"></div>
<div class="a" style="left:271px;top:113px;width:12px;height:22px;background:#f3f3f3"></div>
<span class="t" style="left:228px;top:116px;"><i style="width:12px">第</i>7<i style="width:12px">层</i></span>
<svg class="a" style="left:274px;top:123px" width="7" height="4" viewBox="0 0 7 4"><path d="M0.5 0H6.5L3.5 3.5Z" fill="#000"/></svg>
<div class="a" style="left:285px;top:113px;width:70px;height:22px;background:#fff"></div>
<div class="a" style="left:343px;top:113px;width:12px;height:22px;background:#f3f3f3"></div>
<span class="t" style="left:287px;top:116px;"><i style="width:12px">梁</i></span>
<svg class="a" style="left:346px;top:123px" width="7" height="4" viewBox="0 0 7 4"><path d="M0.5 0H6.5L3.5 3.5Z" fill="#000"/></svg>
<div class="a" style="left:357px;top:113px;width:70px;height:22px;background:#fff"></div>
<div class="a" style="left:415px;top:113px;width:12px;height:22px;background:#f3f3f3"></div>
<span class="t" style="left:359px;top:116px;"><i style="width:12px">梁</i></span>
<svg class="a" style="left:418px;top:123px" width="7" height="4" viewBox="0 0 7 4"><path d="M0.5 0H6.5L3.5 3.5Z" fill="#000"/></svg>
<div class="a" style="left:429px;top:113px;width:69px;height:22px;background:#fff"></div>
<div class="a" style="left:486px;top:113px;width:12px;height:22px;background:#f3f3f3"></div>
<span class="t" style="left:431px;top:116px;">KL-4</span>
<svg class="a" style="left:489px;top:123px" width="7" height="4" viewBox="0 0 7 4"><path d="M0.5 0H6.5L3.5 3.5Z" fill="#000"/></svg>
<div class="a" style="left:501px;top:113px;width:70px;height:22px;background:#fff"></div>
<div class="a" style="left:559px;top:113px;width:12px;height:22px;background:#f3f3f3"></div>
<span class="t" style="left:503px;top:116px;"><i style="width:24px">分层</i>1</span>
<svg class="a" style="left:562px;top:123px" width="7" height="4" viewBox="0 0 7 4"><path d="M0.5 0H6.5L3.5 3.5Z" fill="#000"/></svg>
<div class="a" style="left:576px;top:115px;width:1px;height:18px;background:#a0a0a0"></div>
<svg class="a" style="left:582px;top:116px" width="16" height="16" viewBox="0 0 16 16"><rect x="0.5" y="2.5" width="15" height="12" fill="#fff8f0" stroke="#f0a050" stroke-width="1.2"/><rect x="1" y="0.5" width="9" height="2.2" fill="#b0b0b0"/><path d="M3 10L7 6L8.5 7.5H13Q15 7.5 15 9.5V11.5H9L6.5 9L4.5 11.5Z" fill="#e8b820" stroke="#805800" stroke-width="0.7"/><path d="M6.5 11L9 8.5L11 11" stroke="#805800" stroke-width="0.8" fill="none"/></svg>
<span class="t" style="left:602px;top:117px;"><i style="width:24px">属性</i></span>
<svg class="a" style="left:633px;top:116px" width="16" height="16" viewBox="0 0 16 16"><path d="M0.5 10.5L2 12H14L15.5 13.5" stroke="#202020" stroke-width="1.1" fill="none"/><path d="M13.5 1.5L6 10.5" stroke="#e8c040" stroke-width="2.6"/><path d="M14.5 0.5L12.8 2.5" stroke="#d84040" stroke-width="2.6"/><path d="M6 10.5L4.8 12.6L7.3 11.8Z" fill="#403020"/></svg>
<span class="t" style="left:653px;top:117px;"><i style="width:48px">编辑钢筋</i></span>
<svg class="a" style="left:708px;top:116px" width="16" height="16" viewBox="0 0 16 16"><rect x="9" y="1.5" width="6.5" height="13" fill="#e8f0fc" stroke="#4868b8" stroke-width="1.1"/><path d="M11 4.5H14M11 7H14M11 9.5H14M11 12H14" stroke="#4868b8" stroke-width="1"/><path d="M1 3.5H3M1 8H3M1 12.5H3" stroke="#2858c8" stroke-width="2"/><path d="M4.5 3.5H7M4.5 8H7M4.5 12.5H7" stroke="#808cb0" stroke-width="1" stroke-dasharray="1 1"/></svg>
<span class="t" style="left:728px;top:117px;"><i style="width:48px">构件列表</i></span>
<svg class="a" style="left:784px;top:116px" width="16" height="16" viewBox="0 0 16 16"><path d="M2 14L9.5 5.5" stroke="#3868d0" stroke-width="2.6" stroke-linecap="round"/><path d="M9 3L13.5 7.5" stroke="#1a3a80" stroke-width="2" stroke-linecap="round"/><path d="M11 5L14 1.5" stroke="#3058b0" stroke-width="3" stroke-linecap="round"/><path d="M1 15.5L2.5 13" stroke="#3868d0" stroke-width="1"/></svg>
<span class="t" style="left:804px;top:117px;"><i style="width:48px">拾取构件</i></span>
<div class="a" style="left:858px;top:111px;width:422px;height:26px;background:linear-gradient(#fdfdfd,#f1f1f1);border-radius:3px"></div>
<div class="a" style="left:861px;top:116px;width:2px;height:16px;background:repeating-linear-gradient(#a8a8a8 0 2px,transparent 2px 4px)"></div>
<svg class="a" style="left:868px;top:116px" width="16" height="16" viewBox="0 0 16 16"><path d="M5 0.5V15.5M11.5 0.5V15.5M0.5 5H15.5M0.5 11.5H15.5" stroke="#4a4a9a" stroke-width="1.2"/><path d="M0.5 15.5L15.5 0.5" stroke="#e02020" stroke-width="1.1"/><circle cx="4.5" cy="11.5" r="1.7" fill="#208820"/><circle cx="11.5" cy="4.5" r="1.7" fill="#208820"/></svg>
<span class="t" style="left:888px;top:117px;"><i style="width:24px">两点</i></span>
<svg class="a" style="left:920px;top:116px" width="16" height="16" viewBox="0 0 16 16"><path d="M5 0.5V15.5M11 0.5V15.5" stroke="#4a4a9a" stroke-width="1.3"/><path d="M0.5 5.5H15.5M0.5 10.5H15.5" stroke="#c82030" stroke-width="1.3"/></svg>
<span class="t" style="left:939px;top:117px;"><i style="width:24px">平行</i></span>
<svg class="a" style="left:971px;top:116px" width="16" height="16" viewBox="0 0 16 16"><path d="M4.5 0.5V15.5M10.5 0.5V15.5M0.5 5H15.5M0.5 10.5H12" stroke="#4a4a9a" stroke-width="1.2"/><path d="M0.5 15.5L14.5 0.5" stroke="#e02020" stroke-width="1.2"/><ellipse cx="14" cy="10.5" rx="1.3" ry="2" fill="#fff" stroke="#e02020" stroke-width="1.1"/></svg>
<span class="t" style="left:990px;top:117px;"><i style="width:24px">点角</i></span>
<svg class="a" style="left:1032px;top:116px" width="16" height="16" viewBox="0 0 16 16"><path d="M2.5 13.5Q3 4 12.5 2.5" stroke="#e02020" stroke-width="1.3" fill="none"/><circle cx="2.5" cy="13.5" r="1.3" fill="#fff" stroke="#e02020"/><circle cx="13" cy="2.5" r="1.3" fill="#fff" stroke="#e02020"/><path d="M8 3V15.5M1 8.5H15.5" stroke="#3a4aa0" stroke-width="1.2"/></svg>
<span class="t" style="left:1053px;top:117px;"><i style="width:48px">三点辅轴</i></span>
<svg class="a" style="left:1120px;top:116px" width="16" height="16" viewBox="0 0 16 16"><path d="M0 14.5H16" stroke="#2a4a9a" stroke-width="1"/><path d="M15 1L9 9" stroke="#d8a010" stroke-width="2.4"/><path d="M9.5 8L7 11" stroke="#8890a0" stroke-width="2.6"/><path d="M7.5 10.5L4.5 13.5" stroke="#d02880" stroke-width="2.8" stroke-linecap="round"/><path d="M3 14L6 11" stroke="#404060" stroke-width="0.8"/></svg>
<span class="t" style="left:1140px;top:117px;"><i style="width:48px">删除辅轴</i></span>
<svg class="a" style="left:1195px;top:116px" width="16" height="16" viewBox="0 0 16 16"><path d="M1.5 10V15.5M14.5 10V15.5M1.5 13H14.5" stroke="#101010" stroke-width="1.1"/><path d="M1.5 13L4 11.5V14.5ZM14.5 13L12 11.5V14.5Z" fill="#101010"/><rect x="2" y="6" width="2.6" height="2.6" fill="#38b838"/><rect x="12.5" y="0.5" width="2.6" height="2.6" fill="#38b838"/></svg>
<span class="t" style="left:1215px;top:117px;"><i style="width:48px">尺寸标注</i></span>
<svg class="a" style="left:1020px;top:123px" width="7" height="4" viewBox="0 0 7 4"><path d="M0.5 0H6.5L3.5 3.5Z" fill="#000"/></svg>
<svg class="a" style="left:1107px;top:123px" width="7" height="4" viewBox="0 0 7 4"><path d="M0.5 0H6.5L3.5 3.5Z" fill="#000"/></svg>
<svg class="a" style="left:1269px;top:123px" width="7" height="4" viewBox="0 0 7 4"><path d="M0.5 0H6.5L3.5 3.5Z" fill="#000"/></svg>
<div class="a" style="left:217px;top:140px;width:1114px;height:26px;background:linear-gradient(#fdfdfd,#f1f1f1);border-radius:3px"></div>
<div class="a" style="left:220px;top:145px;width:2px;height:16px;background:repeating-linear-gradient(#a8a8a8 0 2px,transparent 2px 4px)"></div>
<div class="a" style="left:810px;top:142px;width:75px;height:22px;background:#dfecfa;border:1px solid #3b8fe0"></div>
<div class="a" style="left:1206px;top:142px;width:99px;height:22px;background:#bcdcf8;border:1px solid #2a84e0"></div>
<div class="a" style="left:508px;top:142px;width:54px;height:22px;background:#fff"></div>
<div class="a" style="left:550px;top:142px;width:12px;height:22px;background:#f3f3f3"></div>
<svg class="a" style="left:554px;top:152px" width="7" height="4" viewBox="0 0 7 4"><path d="M0.5 0H6.5L3.5 3.5Z" fill="#000"/></svg>
<svg class="a" style="left:229px;top:145px" width="16" height="16" viewBox="0 0 16 16"><path d="M3.5 2.5V12L5.8 10L7.5 14L9 13.4L7.3 9.5H10Z" fill="#fff" stroke="#506088" stroke-width="0.9"/></svg>
<span class="t" style="left:248px;top:146px;"><i style="width:24px">选择</i></span>
<svg class="a" style="left:297px;top:145px" width="16" height="16" viewBox="0 0 16 16"><path d="M1.5 1.5L13 13" stroke="#1a3a7a" stroke-width="1.5"/><path d="M15 15L8.5 13.5L13.5 8.5Z" fill="#1a3a7a"/></svg>
<span class="t" style="left:317px;top:146px;"><i style="width:24px">直线</i></span>
<svg class="a" style="left:348px;top:145px" width="16" height="16" viewBox="0 0 16 16"><circle cx="8" cy="9" r="6" fill="none" stroke="#1a3a7a" stroke-width="1.4"/><path d="M8 6V12M5 9H11" stroke="#1a3a7a" stroke-width="1.2"/><path d="M0.5 1L5.5 1.5L2.5 5.5Z" fill="#1a3a7a"/><rect x="13" y="2.5" width="2.5" height="2.5" fill="#e02020"/></svg>
<span class="t" style="left:368px;top:146px;"><i style="width:48px">点加长度</i></span>
<svg class="a" style="left:424px;top:145px" width="16" height="16" viewBox="0 0 16 16"><path d="M2 14Q3 5 12 2.5" stroke="#3868c8" stroke-width="1.5" fill="none"/><circle cx="2" cy="14" r="1.5" fill="#e04020"/><circle cx="12.5" cy="2.5" r="1.5" fill="#fff" stroke="#e04020"/><circle cx="5.5" cy="6" r="1.1" fill="#e04020"/></svg>
<span class="t" style="left:443px;top:146px;"><i style="width:48px">三点画弧</i></span>
<svg class="a" style="left:568px;top:145px" width="16" height="16" viewBox="0 0 16 16"><rect x="1.5" y="3.5" width="13" height="9.5" fill="url(#gb)" stroke="#4a68d8"/></svg>
<span class="t" style="left:588px;top:146px;"><i style="width:24px">矩形</i></span>
<svg class="a" style="left:625px;top:145px" width="16" height="16" viewBox="0 0 16 16"><rect x="0.5" y="0.5" width="15" height="15" fill="#e8f0fc" stroke="#405080" stroke-dasharray="1.5 1"/><path d="M8 2.5V6.5M8 9.5V13.5M2.5 8H6.5M9.5 8H13.5" stroke="#101828" stroke-width="1.2"/><path d="M8 7L6.3 5H9.7ZM8 9L6.3 11H9.7ZM7 8L5 6.3V9.7ZM9 8L11 6.3V9.7Z" fill="#101828"/><path d="M3 3H4.5V4.5H3ZM11.5 3H13V4.5H11.5ZM3 11.5H4.5V13H3ZM11.5 11.5H13V13H11.5Z" fill="#405080"/></svg>
<span class="t" style="left:645px;top:146px;"><i style="width:48px">智能布置</i></span>
<svg class="a" style="left:714px;top:145px" width="16" height="16" viewBox="0 0 16 16"><path d="M0.5 3H11L7 8.5V15L4.5 13.5V8.5Z" fill="#f4f8ff" stroke="#2a68d8" stroke-width="1.3"/><path d="M15 2L8.5 10.5" stroke="#e0b030" stroke-width="2.6"/><path d="M15.8 1L14.3 3" stroke="#d83030" stroke-width="2.6"/><path d="M8.5 10.5L7.2 13L9.8 12Z" fill="#202020"/></svg>
<span class="t" style="left:734px;top:146px;"><i style="width:72px">修改梁段属性</i></span>
<svg class="a" style="left:813px;top:145px" width="16" height="16" viewBox="0 0 16 16"><rect x="1" y="8.5" width="6" height="6" fill="#a8c0ec" stroke="#6080c0" stroke-width="0.8"/><rect x="7.5" y="11" width="6" height="4" fill="#c4d4f0"/><path d="M14.5 1L6.5 10.5" stroke="#2860d0" stroke-width="2.8"/><path d="M6.5 10.5L4.8 13.8L8 12.3Z" fill="#203050"/><path d="M3 14.5L5 12" stroke="#203050" stroke-width="1"/></svg>
<span class="t" style="left:833px;top:146px;"><i style="width:48px">原位标注</i></span>
<svg class="a" style="left:900px;top:145px" width="16" height="16" viewBox="0 0 16 16"><path d="M1 15V10Q1 8 3 8H5.5V13H7.5V8H12Q14.5 8 14.5 10V15H12V10.5H10V15H7.5V13" fill="#c4d8f4" stroke="#5880c0" stroke-width="1"/><path d="M14 1.5L7.5 9" stroke="#e8c890" stroke-width="2.8"/><path d="M15 0.5L13.5 2.3" stroke="#e08080" stroke-width="2.8"/><path d="M7.5 9L6.3 11.3L8.8 10.4Z" fill="#404040"/></svg>
<span class="t" style="left:920px;top:146px;"><i style="width:48px">重提梁跨</i></span>
<svg class="a" style="left:987px;top:145px" width="16" height="16" viewBox="0 0 16 16"><path d="M14.5 1.5L10 6" stroke="#5048b0" stroke-width="3.2" stroke-linecap="round"/><path d="M10.5 5.5L8 8" stroke="#909098" stroke-width="3.6"/><path d="M8.5 6L11 9.5L6 14.5L1 10Z" fill="#e8d070" stroke="#a08820" stroke-width="0.8"/><path d="M3.5 10.5L6.5 13M5.5 8.5L8.5 11.5" stroke="#b09830" stroke-width="0.8"/></svg>
<span class="t" style="left:1007px;top:146px;"><i style="width:72px">梁跨数据复制</i></span>
<svg class="a" style="left:1098px;top:145px" width="16" height="16" viewBox="0 0 16 16"><path d="M5 1.5H15.5M0.5 5H8M0.5 11H5M3 14V16M13.5 5V8" stroke="#2878d8" stroke-width="1.5"/><circle cx="8.5" cy="8.5" r="4" fill="url(#gl)" stroke="#506080" stroke-width="1.2"/><path d="M11.5 11.5L15 15" stroke="#e08020" stroke-width="2.6" stroke-linecap="round"/></svg>
<span class="t" style="left:1118px;top:146px;"><i style="width:84px">批量识别梁支座</i></span>
<svg class="a" style="left:1209px;top:145px" width="16" height="16" viewBox="0 0 16 16"><path d="M0.5 2.5H9.5L6.5 7V12L4 10.5V7Z" fill="#e8f0ff" stroke="#2868d8" stroke-width="1.2"/><path d="M6.5 4.5H15.5L12.5 9.5V15L10 13.5V9.5Z" fill="#fff" stroke="#2868d8" stroke-width="1.2"/><path d="M2 9.5L6 13L4.5 14.5L1.5 12.5Z" fill="#5880d0"/></svg>
<span class="t" style="left:1229px;top:146px;"><i style="width:72px">应用到同名梁</i></span>
<svg class="a" style="left:278px;top:152px" width="7" height="4" viewBox="0 0 7 4"><path d="M0.5 0H6.5L3.5 3.5Z" fill="#000"/></svg>
<svg class="a" style="left:497px;top:152px" width="7" height="4" viewBox="0 0 7 4"><path d="M0.5 0H6.5L3.5 3.5Z" fill="#000"/></svg>
<svg class="a" style="left:696px;top:152px" width="7" height="4" viewBox="0 0 7 4"><path d="M0.5 0H6.5L3.5 3.5Z" fill="#000"/></svg>
<svg class="a" style="left:888px;top:152px" width="7" height="4" viewBox="0 0 7 4"><path d="M0.5 0H6.5L3.5 3.5Z" fill="#000"/></svg>
<svg class="a" style="left:975px;top:152px" width="7" height="4" viewBox="0 0 7 4"><path d="M0.5 0H6.5L3.5 3.5Z" fill="#000"/></svg>
<svg class="a" style="left:1086px;top:152px" width="7" height="4" viewBox="0 0 7 4"><path d="M0.5 0H6.5L3.5 3.5Z" fill="#000"/></svg>
<div class="a" style="left:291px;top:144px;width:1px;height:18px;background:#a0a0a0"></div>
<div class="a" style="left:620px;top:144px;width:1px;height:18px;background:#a0a0a0"></div>
<div class="a" style="left:708px;top:144px;width:1px;height:18px;background:#a0a0a0"></div>
<svg class="a" style="left:1320px;top:145px" width="9" height="6" viewBox="0 0 9 6"><path d="M0.5 0.5L3 3L0.5 5.5M5 0.5L7.5 3L5 5.5" stroke="#000" stroke-width="1.2" fill="none"/></svg>
<div class="a" style="left:1336px;top:145px;width:2px;height:16px;background:repeating-linear-gradient(#a8a8a8 0 2px,transparent 2px 4px)"></div>
<div class="a" style="left:1340px;top:140px;width:26px;height:26px;background:linear-gradient(#fdfdfd,#f1f1f1);border-radius:3px"></div>
<div class="a" style="left:0px;top:84px;width:213px;height:15px;background:#0054e3"></div>
<span class="t" style="left:0px;top:83px;color:#fff;font-size:12px;letter-spacing:0.5px"><i style="width:60px">模块导航栏</i></span>
<svg class="a" style="left:180px;top:86px" width="30" height="12" viewBox="0 0 30 12"><path d="M3.5 1.5H7.5M4.5 1.5V6.5M6.5 1.5V6.5M2.5 6.5H8.5M5.5 6.5V10.5" stroke="#fff" stroke-width="1.2" fill="none"/><path d="M20.5 1.5L27.5 9.5M27.5 1.5L20.5 9.5" stroke="#fff" stroke-width="1.1" fill="none"/></svg>
<div class="a" style="left:0px;top:100px;width:211px;height:22px;background:#f0f0f0;border:1px solid #a0a0a0;border-top-color:#fdfdfd"></div>
<span class="t" style="left:83px;top:104px;font-size:12px;letter-spacing:0.3px"><i style="width:48px">工程设置</i></span>
<div class="a" style="left:0px;top:123px;width:211px;height:21px;background:#f0f0f0;border:1px solid #6e6e6e;border-bottom:2px solid #8c8c8c"></div>
<span class="t" style="left:83px;top:126px;font-size:12px;letter-spacing:0.3px"><i style="width:48px">绘图输入</i></span>
<div class="a" style="left:0px;top:146px;width:211px;height:514px;background:#fff;border:1px solid #808898;border-left:2px solid #a0a0a0;border-top:1px solid #c8c8c8"></div>
<div class="a" style="left:211px;top:100px;width:1px;height:606px;background:#d4d4d8"></div>
<div class="a" style="left:212px;top:100px;width:2px;height:606px;background:#fafafa"></div>
<div class="a" style="left:2px;top:147px;width:208px;height:24px;background:#f6f6f6"></div>
<svg class="a" style="left:6px;top:152px" width="42" height="14" viewBox="0 0 42 14"><path d="M4.5 0.5V8.5M0.5 4.5H8.5M11.5 6.5V13.5M8 10H15" stroke="#064848" stroke-width="2.2" fill="none"/><path d="M24 3H32M31 9H40" stroke="#064848" stroke-width="2.2" fill="none"/></svg>
<div class="a" style="left:2px;top:171px;width:208px;height:1px;background:#a0a0a0"></div>
<div class="a" style="left:15px;top:190px;width:1px;height:96px;background:repeating-linear-gradient(#909090 0 1px,transparent 1px 2px)"></div>
<div class="a" style="left:15px;top:334px;width:1px;height:80px;background:repeating-linear-gradient(#909090 0 1px,transparent 1px 2px)"></div>
<div class="a" style="left:15px;top:446px;width:1px;height:32px;background:repeating-linear-gradient(#909090 0 1px,transparent 1px 2px)"></div>
<div class="a" style="left:15px;top:542px;width:1px;height:64px;background:repeating-linear-gradient(#909090 0 1px,transparent 1px 2px)"></div>
<div class="a" style="left:34px;top:190px;width:1px;height:89px;background:repeating-linear-gradient(#909090 0 1px,transparent 1px 2px)"></div>
<div class="a" style="left:34px;top:334px;width:1px;height:73px;background:repeating-linear-gradient(#909090 0 1px,transparent 1px 2px)"></div>
<div class="a" style="left:34px;top:446px;width:1px;height:25px;background:repeating-linear-gradient(#909090 0 1px,transparent 1px 2px)"></div>
<div class="a" style="left:34px;top:542px;width:1px;height:57px;background:repeating-linear-gradient(#909090 0 1px,transparent 1px 2px)"></div>
<div class="a" style="left:43px;top:446px;width:57px;height:16px;background:#d6d6d6"></div>
<svg class="a" style="left:9px;top:178px" width="11" height="8" viewBox="0 0 11 8"><path d="M1 1.5L5.5 6L10 1.5" stroke="#404040" stroke-width="1.5" fill="none"/></svg>
<svg class="a" style="left:25px;top:174px" width="18" height="14" viewBox="0 0 18 14"><path d="M1.5 2.5H6L7.5 4H13.5V6H4L1.5 12.5Z" fill="#e8c050" stroke="#8a6a18" stroke-width="0.9"/><path d="M1.5 12.5L4.5 6H17L13.5 12.5Z" fill="url(#gf)" stroke="#8a6a18" stroke-width="0.9"/></svg>
<div class="a" style="left:21px;top:182px;width:5px;height:1px;background:repeating-linear-gradient(90deg,#909090 0 1px,transparent 1px 2px)"></div>
<span class="s" style="left:47px;top:174px;"><i style="width:72px">常用构件类型</i></span>
<div class="a" style="left:35px;top:198px;width:11px;height:1px;background:repeating-linear-gradient(90deg,#909090 0 1px,transparent 1px 2px)"></div>
<svg class="a" style="left:45px;top:190px" width="16" height="16" viewBox="0 0 16 16"><path d="M3.5 1V14M7.5 1V14M11.5 1V14M1 4.5H13M1 8H13M1 11.5H13" stroke="#2a5ad0" stroke-width="1.2"/><path d="M13 3.5H15V5.5H13ZM13 7H15V9H13ZM13 10.5H15V12.5H13ZM2.5 14H4.5V16H2.5ZM6.5 14H8.5V16H6.5ZM10.5 14H12.5V16H10.5Z" fill="#fff" stroke="#2a5ad0" stroke-width="0.8"/></svg>
<span class="s" style="left:66px;top:190px;"><i style="width:24px">轴网</i><b>(J)</b></span>
<div class="a" style="left:35px;top:214px;width:11px;height:1px;background:repeating-linear-gradient(90deg,#909090 0 1px,transparent 1px 2px)"></div>
<svg class="a" style="left:45px;top:206px" width="16" height="16" viewBox="0 0 16 16"><rect x="1.5" y="1.5" width="13" height="13" fill="#e8f0ff" stroke="#1848b0" stroke-width="2"/><rect x="5" y="5" width="6" height="6" fill="#fff" stroke="#1848b0" stroke-width="1.3"/><path d="M1 5H5M11 5H15M1 11H5M11 11H15M5 1V5M11 1V5M5 11V15M11 11V15" stroke="#1848b0" stroke-width="1"/></svg>
<span class="s" style="left:66px;top:206px;"><i style="width:48px">筏板基础</i><b>(M)</b></span>
<div class="a" style="left:35px;top:230px;width:11px;height:1px;background:repeating-linear-gradient(90deg,#909090 0 1px,transparent 1px 2px)"></div>
<svg class="a" style="left:45px;top:222px" width="16" height="16" viewBox="0 0 16 16"><path d="M1 1.5H15L14 5H11V15H5.5V5H2Z" fill="url(#gb)" stroke="#1848c0" stroke-width="1.1"/><path d="M1.5 2H14.5" stroke="#2050c8" stroke-width="1.6"/></svg>
<span class="s" style="left:66px;top:222px;"><i style="width:24px">框柱</i><b>(Z)</b></span>
<div class="a" style="left:35px;top:246px;width:11px;height:1px;background:repeating-linear-gradient(90deg,#909090 0 1px,transparent 1px 2px)"></div>
<svg class="a" style="left:45px;top:238px" width="16" height="16" viewBox="0 0 16 16"><rect x="1.5" y="1.5" width="12" height="13" fill="#f4ece4" stroke="#e08040" stroke-width="1.1"/><rect x="2.5" y="2.5" width="10" height="11" fill="#d8d8d8" opacity="0.7"/><path d="M3 13H12M3 11H10M4 9H8M4 7H6" stroke="#808080" stroke-width="1" stroke-dasharray="1 1"/><path d="M13.5 5H15.5M13.5 8H15.5M13.5 11H15.5" stroke="#e08040" stroke-width="1.2"/></svg>
<span class="s" style="left:66px;top:238px;"><i style="width:36px">剪力墙</i><b>(Q)</b></span>
<div class="a" style="left:35px;top:262px;width:11px;height:1px;background:repeating-linear-gradient(90deg,#909090 0 1px,transparent 1px 2px)"></div>
<svg class="a" style="left:45px;top:254px" width="16" height="16" viewBox="0 0 16 16"><path d="M1.5 1.5H14.5L13 4L10.5 6V15H6V7L3.5 4.5Z" fill="#d8e8ff" stroke="#1a60d8" stroke-width="1.2"/><path d="M5 3.5L9 7.5M7.5 2.5L10.5 5.5M8 9V15" stroke="#1a60d8" stroke-width="1"/></svg>
<span class="s" style="left:66px;top:254px;"><i style="width:12px">梁</i><b>(L)</b></span>
<div class="a" style="left:35px;top:278px;width:11px;height:1px;background:repeating-linear-gradient(90deg,#909090 0 1px,transparent 1px 2px)"></div>
<svg class="a" style="left:45px;top:270px" width="16" height="16" viewBox="0 0 16 16"><path d="M4 1.5H15L12 14.5H1Z" fill="url(#gb)" stroke="#1848c0" stroke-width="1.3"/><path d="M1 15H12" stroke="#1038a0" stroke-width="1.6"/></svg>
<span class="s" style="left:66px;top:270px;"><i style="width:36px">现浇板</i><b>(B)</b></span>
<svg class="a" style="left:11px;top:288px" width="7" height="11" viewBox="0 0 7 11"><path d="M1.5 1L6 5.5L1.5 10" stroke="#a6a6a6" stroke-width="1.3" fill="none"/></svg>
<svg class="a" style="left:25px;top:286px" width="18" height="14" viewBox="0 0 18 14"><path d="M1.5 3V1.5H6L7 3Z" fill="#f0d070" stroke="#9a7a28" stroke-width="0.8"/><rect x="1.5" y="3" width="13.5" height="10" fill="url(#gf)" stroke="#9a7a28" stroke-width="0.9"/></svg>
<div class="a" style="left:21px;top:294px;width:5px;height:1px;background:repeating-linear-gradient(90deg,#909090 0 1px,transparent 1px 2px)"></div>
<span class="s" style="left:47px;top:286px;"><i style="width:24px">轴线</i></span>
<svg class="a" style="left:11px;top:304px" width="7" height="11" viewBox="0 0 7 11"><path d="M1.5 1L6 5.5L1.5 10" stroke="#a6a6a6" stroke-width="1.3" fill="none"/></svg>
<svg class="a" style="left:25px;top:302px" width="18" height="14" viewBox="0 0 18 14"><path d="M1.5 3V1.5H6L7 3Z" fill="#f0d070" stroke="#9a7a28" stroke-width="0.8"/><rect x="1.5" y="3" width="13.5" height="10" fill="url(#gf)" stroke="#9a7a28" stroke-width="0.9"/></svg>
<div class="a" style="left:21px;top:310px;width:5px;height:1px;background:repeating-linear-gradient(90deg,#909090 0 1px,transparent 1px 2px)"></div>
<span class="s" style="left:47px;top:302px;"><i style="width:12px">柱</i></span>
<svg class="a" style="left:9px;top:322px" width="11" height="8" viewBox="0 0 11 8"><path d="M1 1.5L5.5 6L10 1.5" stroke="#404040" stroke-width="1.5" fill="none"/></svg>
<svg class="a" style="left:25px;top:318px" width="18" height="14" viewBox="0 0 18 14"><path d="M1.5 2.5H6L7.5 4H13.5V6H4L1.5 12.5Z" fill="#e8c050" stroke="#8a6a18" stroke-width="0.9"/><path d="M1.5 12.5L4.5 6H17L13.5 12.5Z" fill="url(#gf)" stroke="#8a6a18" stroke-width="0.9"/></svg>
<div class="a" style="left:21px;top:326px;width:5px;height:1px;background:repeating-linear-gradient(90deg,#909090 0 1px,transparent 1px 2px)"></div>
<span class="s" style="left:47px;top:318px;"><i style="width:12px">墙</i></span>
<div class="a" style="left:35px;top:342px;width:11px;height:1px;background:repeating-linear-gradient(90deg,#909090 0 1px,transparent 1px 2px)"></div>
<svg class="a" style="left:45px;top:334px" width="16" height="16" viewBox="0 0 16 16"><rect x="1.5" y="1.5" width="12" height="13" fill="#f4ece4" stroke="#e08040" stroke-width="1.1"/><rect x="2.5" y="2.5" width="10" height="11" fill="#d8d8d8" opacity="0.7"/><path d="M3 13H12M3 11H10M4 9H8M4 7H6" stroke="#808080" stroke-width="1" stroke-dasharray="1 1"/><path d="M13.5 5H15.5M13.5 8H15.5M13.5 11H15.5" stroke="#e08040" stroke-width="1.2"/></svg>
<span class="s" style="left:66px;top:334px;"><i style="width:36px">剪力墙</i><b>(Q)</b></span>
<div class="a" style="left:35px;top:358px;width:11px;height:1px;background:repeating-linear-gradient(90deg,#909090 0 1px,transparent 1px 2px)"></div>
<svg class="a" style="left:45px;top:350px" width="16" height="16" viewBox="0 0 16 16"><path d="M3 1.5H13.5V14.5H3V11.5H9V9.5H6V6.5H9V4.5H3Z" fill="#fce8d8" stroke="#d06820" stroke-width="1.3"/></svg>
<span class="s" style="left:66px;top:350px;"><i style="width:60px">人防门框墙</i><b>(RF)</b></span>
<div class="a" style="left:35px;top:374px;width:11px;height:1px;background:repeating-linear-gradient(90deg,#909090 0 1px,transparent 1px 2px)"></div>
<svg class="a" style="left:45px;top:366px" width="16" height="16" viewBox="0 0 16 16"><rect x="1" y="1.5" width="14" height="13" fill="#f8d0b0" stroke="#e07030" stroke-width="1"/><path d="M1 5H15M1 8.5H15M1 12H15" stroke="#fff" stroke-width="1.2"/><path d="M8 1.5V5M4.5 5V8.5M11.5 5V8.5M8 8.5V12M4.5 12V14.5M11.5 12V14.5" stroke="#fff" stroke-width="1.2"/></svg>
<span class="s" style="left:66px;top:366px;"><i style="width:36px">砌体墙</i><b>(Q)</b></span>
<div class="a" style="left:35px;top:390px;width:11px;height:1px;background:repeating-linear-gradient(90deg,#909090 0 1px,transparent 1px 2px)"></div>
<svg class="a" style="left:45px;top:382px" width="16" height="16" viewBox="0 0 16 16"><path d="M2.5 4.5L6 1.5H15L11.5 4.5Z" fill="#2858b0" stroke="#102858" stroke-width="0.8"/><path d="M2.5 4.5H11.5V14.5H2.5Z" fill="#e8f0fc" stroke="#405880" stroke-width="0.9"/><path d="M11.5 4.5L15 1.5V11.5L11.5 14.5Z" fill="#c0d4f0" stroke="#405880" stroke-width="0.9"/><path d="M5.5 4.5V14.5" stroke="#8098c0" stroke-width="0.8"/></svg>
<span class="s" style="left:66px;top:382px;"><i style="width:24px">暗梁</i><b>(A)</b></span>
<div class="a" style="left:35px;top:406px;width:11px;height:1px;background:repeating-linear-gradient(90deg,#909090 0 1px,transparent 1px 2px)"></div>
<svg class="a" style="left:45px;top:398px" width="16" height="16" viewBox="0 0 16 16"><path d="M0 1.5H14V7M3 3.5V16M3 5.5H12M3 9H8M8 5.5V12M5.5 12H11M10.5 3.5V9H15.5M8 12V16" stroke="#1848c0" stroke-width="1.2" fill="none"/></svg>
<span class="s" style="left:66px;top:398px;"><i style="width:48px">砌体加筋</i><b>(Y)</b></span>
<svg class="a" style="left:11px;top:416px" width="7" height="11" viewBox="0 0 7 11"><path d="M1.5 1L6 5.5L1.5 10" stroke="#a6a6a6" stroke-width="1.3" fill="none"/></svg>
<svg class="a" style="left:25px;top:414px" width="18" height="14" viewBox="0 0 18 14"><path d="M1.5 3V1.5H6L7 3Z" fill="#f0d070" stroke="#9a7a28" stroke-width="0.8"/><rect x="1.5" y="3" width="13.5" height="10" fill="url(#gf)" stroke="#9a7a28" stroke-width="0.9"/></svg>
<div class="a" style="left:21px;top:422px;width:5px;height:1px;background:repeating-linear-gradient(90deg,#909090 0 1px,transparent 1px 2px)"></div>
<span class="s" style="left:47px;top:414px;"><i style="width:36px">门窗洞</i></span>
<svg class="a" style="left:9px;top:434px" width="11" height="8" viewBox="0 0 11 8"><path d="M1 1.5L5.5 6L10 1.5" stroke="#404040" stroke-width="1.5" fill="none"/></svg>
<svg class="a" style="left:25px;top:430px" width="18" height="14" viewBox="0 0 18 14"><path d="M1.5 2.5H6L7.5 4H13.5V6H4L1.5 12.5Z" fill="#e8c050" stroke="#8a6a18" stroke-width="0.9"/><path d="M1.5 12.5L4.5 6H17L13.5 12.5Z" fill="url(#gf)" stroke="#8a6a18" stroke-width="0.9"/></svg>
<div class="a" style="left:21px;top:438px;width:5px;height:1px;background:repeating-linear-gradient(90deg,#909090 0 1px,transparent 1px 2px)"></div>
<span class="s" style="left:47px;top:430px;"><i style="width:12px">梁</i></span>
<div class="a" style="left:35px;top:454px;width:11px;height:1px;background:repeating-linear-gradient(90deg,#909090 0 1px,transparent 1px 2px)"></div>
<svg class="a" style="left:45px;top:446px" width="16" height="16" viewBox="0 0 16 16"><path d="M1.5 1.5H14.5L13 4L10.5 6V15H6V7L3.5 4.5Z" fill="#d8e8ff" stroke="#1a60d8" stroke-width="1.2"/><path d="M5 3.5L9 7.5M7.5 2.5L10.5 5.5M8 9V15" stroke="#1a60d8" stroke-width="1"/></svg>
<span class="s" style="left:66px;top:446px;"><i style="width:12px">梁</i><b>(L)</b></span>
<div class="a" style="left:35px;top:470px;width:11px;height:1px;background:repeating-linear-gradient(90deg,#909090 0 1px,transparent 1px 2px)"></div>
<svg class="a" style="left:45px;top:462px" width="16" height="16" viewBox="0 0 16 16"><path d="M4.5 1.5H15L11.5 14.5H1Z" fill="#e8f0ff" stroke="#1848c0" stroke-width="1.4"/><path d="M6.5 4H12L9.5 12H4Z" fill="#fff" stroke="#1848c0" stroke-width="1.2"/><path d="M1 15H11.5" stroke="#1038a0" stroke-width="1.5"/></svg>
<span class="s" style="left:66px;top:462px;"><i style="width:24px">圈梁</i><b>(E)</b></span>
<svg class="a" style="left:11px;top:480px" width="7" height="11" viewBox="0 0 7 11"><path d="M1.5 1L6 5.5L1.5 10" stroke="#a6a6a6" stroke-width="1.3" fill="none"/></svg>
<svg class="a" style="left:25px;top:478px" width="18" height="14" viewBox="0 0 18 14"><path d="M1.5 3V1.5H6L7 3Z" fill="#f0d070" stroke="#9a7a28" stroke-width="0.8"/><rect x="1.5" y="3" width="13.5" height="10" fill="url(#gf)" stroke="#9a7a28" stroke-width="0.9"/></svg>
<div class="a" style="left:21px;top:486px;width:5px;height:1px;background:repeating-linear-gradient(90deg,#909090 0 1px,transparent 1px 2px)"></div>
<span class="s" style="left:47px;top:478px;"><i style="width:12px">板</i></span>
<svg class="a" style="left:11px;top:496px" width="7" height="11" viewBox="0 0 7 11"><path d="M1.5 1L6 5.5L1.5 10" stroke="#a6a6a6" stroke-width="1.3" fill="none"/></svg>
<svg class="a" style="left:25px;top:494px" width="18" height="14" viewBox="0 0 18 14"><path d="M1.5 3V1.5H6L7 3Z" fill="#f0d070" stroke="#9a7a28" stroke-width="0.8"/><rect x="1.5" y="3" width="13.5" height="10" fill="url(#gf)" stroke="#9a7a28" stroke-width="0.9"/></svg>
<div class="a" style="left:21px;top:502px;width:5px;height:1px;background:repeating-linear-gradient(90deg,#909090 0 1px,transparent 1px 2px)"></div>
<span class="s" style="left:47px;top:494px;"><i style="width:24px">基础</i></span>
<svg class="a" style="left:11px;top:512px" width="7" height="11" viewBox="0 0 7 11"><path d="M1.5 1L6 5.5L1.5 10" stroke="#a6a6a6" stroke-width="1.3" fill="none"/></svg>
<svg class="a" style="left:25px;top:510px" width="18" height="14" viewBox="0 0 18 14"><path d="M1.5 3V1.5H6L7 3Z" fill="#f0d070" stroke="#9a7a28" stroke-width="0.8"/><rect x="1.5" y="3" width="13.5" height="10" fill="url(#gf)" stroke="#9a7a28" stroke-width="0.9"/></svg>
<div class="a" style="left:21px;top:518px;width:5px;height:1px;background:repeating-linear-gradient(90deg,#909090 0 1px,transparent 1px 2px)"></div>
<span class="s" style="left:47px;top:510px;"><i style="width:24px">其它</i></span>
<svg class="a" style="left:9px;top:530px" width="11" height="8" viewBox="0 0 11 8"><path d="M1 1.5L5.5 6L10 1.5" stroke="#404040" stroke-width="1.5" fill="none"/></svg>
<svg class="a" style="left:25px;top:526px" width="18" height="14" viewBox="0 0 18 14"><path d="M1.5 2.5H6L7.5 4H13.5V6H4L1.5 12.5Z" fill="#e8c050" stroke="#8a6a18" stroke-width="0.9"/><path d="M1.5 12.5L4.5 6H17L13.5 12.5Z" fill="url(#gf)" stroke="#8a6a18" stroke-width="0.9"/></svg>
<div class="a" style="left:21px;top:534px;width:5px;height:1px;background:repeating-linear-gradient(90deg,#909090 0 1px,transparent 1px 2px)"></div>
<span class="s" style="left:47px;top:526px;"><i style="width:36px">自定义</i></span>
<div class="a" style="left:35px;top:550px;width:11px;height:1px;background:repeating-linear-gradient(90deg,#909090 0 1px,transparent 1px 2px)"></div>
<svg class="a" style="left:45px;top:542px" width="16" height="16" viewBox="0 0 16 16"><path d="M3 3L13 13M13 3L3 13" stroke="#2060c0" stroke-width="1.2"/><circle cx="8" cy="8" r="2" fill="#fff" stroke="#2060c0" stroke-width="1.1"/></svg>
<span class="s" style="left:66px;top:542px;"><i style="width:48px">自定义点</i></span>
<div class="a" style="left:35px;top:566px;width:11px;height:1px;background:repeating-linear-gradient(90deg,#909090 0 1px,transparent 1px 2px)"></div>
<svg class="a" style="left:45px;top:558px" width="16" height="16" viewBox="0 0 16 16"><rect x="2.5" y="2.5" width="11" height="11" fill="#fff" stroke="#1858d0" stroke-width="1.4"/><path d="M1 1H4V4H1ZM12 1H15V4H12ZM1 12H4V15H1ZM12 12H15V15H12Z" fill="#fff" stroke="#1858d0" stroke-width="0.9"/></svg>
<span class="s" style="left:66px;top:558px;"><i style="width:48px">自定义线</i><b>(X)</b></span>
<div class="a" style="left:35px;top:582px;width:11px;height:1px;background:repeating-linear-gradient(90deg,#909090 0 1px,transparent 1px 2px)"></div>
<svg class="a" style="left:45px;top:574px" width="16" height="16" viewBox="0 0 16 16"><path d="M1 5L5 1M1 9L9 1M1 13L13 1M2 16L15 3M6 16L15 7M10 16L15 11" stroke="#2060d8" stroke-width="1.2"/></svg>
<span class="s" style="left:66px;top:574px;"><i style="width:48px">自定义面</i></span>
<div class="a" style="left:35px;top:598px;width:11px;height:1px;background:repeating-linear-gradient(90deg,#909090 0 1px,transparent 1px 2px)"></div>
<svg class="a" style="left:45px;top:590px" width="16" height="16" viewBox="0 0 16 16"><path d="M1.5 0.5V5M14.5 0.5V5M1.5 2.5H14.5" stroke="#101010" stroke-width="1.1"/><path d="M1.5 2.5L4 1V4ZM14.5 2.5L12 1V4Z" fill="#101010"/><path d="M6 3.5L14 10.5H10.5L12.5 14.5L10.8 15.3L9 11.3L6 14Z" fill="#c8c8c8" stroke="#909090" stroke-width="0.8"/></svg>
<span class="s" style="left:66px;top:590px;"><i style="width:48px">尺寸标注</i><b>(W)</b></span>
<svg class="a" style="left:11px;top:608px" width="7" height="11" viewBox="0 0 7 11"><path d="M1.5 1L6 5.5L1.5 10" stroke="#a6a6a6" stroke-width="1.3" fill="none"/></svg>
<svg class="a" style="left:25px;top:606px" width="18" height="14" viewBox="0 0 18 14"><path d="M1.5 3V1.5H6L7 3Z" fill="#f0d070" stroke="#9a7a28" stroke-width="0.8"/><rect x="1.5" y="3" width="13.5" height="10" fill="url(#gf)" stroke="#9a7a28" stroke-width="0.9"/></svg>
<div class="a" style="left:21px;top:614px;width:5px;height:1px;background:repeating-linear-gradient(90deg,#909090 0 1px,transparent 1px 2px)"></div>
<span class="s" style="left:47px;top:606px;"><b>CAD</b><i style="width:24px">识别</i></span>
<svg class="a" style="left:132px;top:558px" width="15" height="15" viewBox="0 0 15 15"><rect x="0.5" y="0.5" width="14" height="13.5" fill="#e0ecfc" stroke="#707888" stroke-width="1"/><rect x="2" y="2" width="4.8" height="10.5" fill="#fff" stroke="#3a90f0" stroke-width="1.1"/><rect x="8.2" y="2" width="4.8" height="10.5" fill="#fff" stroke="#3a90f0" stroke-width="1.1"/><path d="M3.5 5H5.3M3.5 7.5H5.3M3.5 10H5.3M9.7 5H11.5M9.7 7.5H11.5M9.7 10H11.5" stroke="#3a90f0" stroke-width="1.2"/></svg>
<span class="t" style="left:148px;top:558px;font-size:9px;font-weight:bold;background:#ffe400;line-height:8px;letter-spacing:-0.2px;color:#403000;transform:rotate(-3deg)">NEW</span>
<svg class="a" style="left:94px;top:606px" width="15" height="15" viewBox="0 0 15 15"><rect x="0.5" y="0.5" width="14" height="13.5" fill="#e0ecfc" stroke="#707888" stroke-width="1"/><rect x="2" y="2" width="4.8" height="10.5" fill="#fff" stroke="#3a90f0" stroke-width="1.1"/><rect x="8.2" y="2" width="4.8" height="10.5" fill="#fff" stroke="#3a90f0" stroke-width="1.1"/><path d="M3.5 5H5.3M3.5 7.5H5.3M3.5 10H5.3M9.7 5H11.5M9.7 7.5H11.5M9.7 10H11.5" stroke="#3a90f0" stroke-width="1.2"/></svg>
<span class="t" style="left:110px;top:607px;font-size:9px;font-weight:bold;background:#ffe400;line-height:8px;letter-spacing:-0.2px;color:#403000;transform:rotate(-3deg)">NEW</span>
<div class="a" style="left:0px;top:661px;width:211px;height:22px;background:#f0f0f0;border:1px solid #a0a0a0;border-top-color:#fdfdfd"></div>
<span class="t" style="left:76px;top:664px;letter-spacing:0.3px"><i style="width:60px">单构件输入</i></span>
<div class="a" style="left:0px;top:683px;width:211px;height:22px;background:#f0f0f0;border:1px solid #a0a0a0;border-top-color:#fdfdfd"></div>
<span class="t" style="left:82px;top:686px;letter-spacing:0.3px"><i style="width:48px">报表预览</i></span>
<svg class="a" style="left:216px;top:167px;font-family:'Liberation Mono',monospace;overflow:hidden" width="1150" height="307" viewBox="216 167 1150 307"><rect x="216" y="167" width="1150" height="307" fill="#fff"/><rect x="217" y="168" width="1149" height="305" fill="#000"/><rect x="403" y="168" width="20" height="273" fill="#b4b4b4"/><rect x="1196" y="230" width="20" height="211" fill="#b4b4b4"/><circle cx="413.5" cy="181" r="12.5" fill="none" stroke="#00a000" stroke-width="1"/><circle cx="677.5" cy="181" r="12.5" fill="none" stroke="#00a000" stroke-width="1"/><circle cx="941.5" cy="181" r="12.5" fill="none" stroke="#00a000" stroke-width="1"/><circle cx="1206.5" cy="181" r="12.5" fill="none" stroke="#00a000" stroke-width="1"/><circle cx="230.5" cy="249.5" r="12.5" fill="none" stroke="#00a000" stroke-width="1"/><circle cx="230.5" cy="345.5" r="12.5" fill="none" stroke="#00a000" stroke-width="1"/><rect x="642" y="310" width="72" height="72" fill="#7f00ff"/><rect x="906" y="310" width="72" height="72" fill="#7f00ff"/><rect x="413" y="334" width="794" height="24" fill="#0a7af5"/><path d="M413.5 326L431.0 357H396.0Z" fill="#ffff00"/><path d="M677.5 326L695.0 357H660.0Z" fill="#ffff00"/><path d="M941.5 326L959.0 357H924.0Z" fill="#ffff00"/><path d="M1206.5 326L1224.0 357H1189.0Z" fill="#ffff00"/><path d="M293.5 168V473" stroke="#00a000" stroke-width="1"/><path d="M333.5 168V473" stroke="#00a000" stroke-width="1"/><path d="M217 229.5H413" stroke="#00a000" stroke-width="1"/><path d="M217 249.5H413" stroke="#00a000" stroke-width="1"/><path d="M217 345.5H413" stroke="#00a000" stroke-width="1"/><path d="M217 441.5H413" stroke="#00a000" stroke-width="1"/><path d="M316.5 212.5L350.5 246.5" stroke="#00a000" stroke-width="1"/><path d="M276.5 232.5L310.5 266.5" stroke="#00a000" stroke-width="1"/><path d="M316.5 232.5L350.5 266.5" stroke="#00a000" stroke-width="1"/><path d="M276.5 328.5L310.5 362.5" stroke="#00a000" stroke-width="1"/><path d="M316.5 328.5L350.5 362.5" stroke="#00a000" stroke-width="1"/><path d="M316.5 424.5L350.5 458.5" stroke="#00a000" stroke-width="1"/><path d="M413.5 168V473" stroke="#ff0000" stroke-width="1"/><path d="M677.5 168V473" stroke="#ff0000" stroke-width="1"/><path d="M805.5 168V473" stroke="#ff0000" stroke-width="1"/><path d="M837.5 168V473" stroke="#ff0000" stroke-width="1"/><path d="M941.5 168V473" stroke="#ff0000" stroke-width="1"/><path d="M1206.5 168V473" stroke="#ff0000" stroke-width="1"/><path d="M1302.5 168V473" stroke="#ff0000" stroke-width="1"/><path d="M413 229.5H1366" stroke="#ff0000" stroke-width="1"/><path d="M413 249.5H1366" stroke="#ff0000" stroke-width="1"/><path d="M413 345.5H1366" stroke="#ff0000" stroke-width="1"/><path d="M413 441.5H1366" stroke="#ff0000" stroke-width="1"/><rect x="510.5" y="308.5" width="44" height="17" fill="none" stroke="#b0b0b0" stroke-width="1"/><rect x="787.5" y="308.5" width="45" height="17" fill="none" stroke="#b0b0b0" stroke-width="1"/><rect x="1064.5" y="308.5" width="45" height="17" fill="none" stroke="#b0b0b0" stroke-width="1"/><rect x="1064.5" y="366.5" width="45" height="16" fill="none" stroke="#b0b0b0" stroke-width="1"/><path d="M496.5 289V334" stroke="#fff" stroke-width="1.5"/><path d="M496.5 334V345" stroke="#f5850a" stroke-width="1.5"/><path d="M272.2 423V384" stroke="#00ff00" stroke-width="3.8"/><path d="M272.2 374L275.8 387H268.6Z" fill="#00ff00"/><path d="M272 423H310" stroke="#ff0000" stroke-width="3.8"/><path d="M321 423L308 419.2V426.8Z" fill="#ff0000"/><path d="M281.5 377L285 382L288.5 377M285 382V387" stroke="#00d000" stroke-width="1" fill="none"/><path d="M309.5 402L318.5 411M318.5 402L309.5 411" stroke="#ff0000" stroke-width="1" fill="none"/><text x="413.5" y="186.5" font-size="14" text-anchor="middle" fill="#909090" font-family="Liberation Sans, sans-serif">8</text><text x="677.5" y="186.5" font-size="13" text-anchor="middle" fill="#c8c8c8" font-family="Liberation Sans, sans-serif">2</text><text x="941.5" y="186.5" font-size="13" text-anchor="middle" fill="#c8c8c8" font-family="Liberation Sans, sans-serif">3</text><text x="1206.5" y="186.5" font-size="13" text-anchor="middle" fill="#c8c8c8" font-family="Liberation Sans, sans-serif">4</text><text x="230.5" y="254" font-size="12" text-anchor="middle" fill="#909090" font-family="Liberation Sans, sans-serif">B</text><text x="230.5" y="350" font-size="12" text-anchor="middle" fill="#909090" font-family="Liberation Sans, sans-serif">0</text><text transform="translate(339 237) rotate(-90)" font-size="15" text-anchor="middle" fill="#e0e0e0" font-family="Liberation Sans, sans-serif" letter-spacing="1">250</text><text transform="translate(259 295) rotate(-90)" font-size="15" text-anchor="middle" fill="#e0e0e0" font-family="Liberation Sans, sans-serif" letter-spacing="1">1200</text><text transform="translate(259 467) rotate(-90)" font-size="15" text-anchor="middle" fill="#e0e0e0" font-family="Liberation Sans, sans-serif" letter-spacing="1">0</text><text transform="translate(338 345) rotate(-90)" font-size="12" text-anchor="middle" fill="#e0e0e0" font-family="Liberation Sans, sans-serif" letter-spacing="1">1</text><defs><clipPath id="cpB"><rect x="413" y="334" width="794" height="24"/></clipPath><clipPath id="cpP"><path d="M642 310H714V334H642ZM642 358H714V382H642ZM906 310H978V334H906ZM906 358H978V382H906Z"/></clipPath><clipPath id="cpO"><path clip-rule="evenodd" d="M218 168H1366V473H218ZM413 334H1207V358H413ZM642 310H714V334H642ZM642 358H714V382H642ZM906 310H978V334H906ZM906 358H978V382H906Z"/></clipPath><clipPath id="cpC"><rect x="403" y="168" width="20" height="273"/></clipPath><g id="ctx"><path d="M623.1 278.4L638.0 278.4L638.0 275.6L623.1 275.6ZM625.7 271.2L633.1 284.1L635.5 282.8L628.0 269.9ZM633.1 269.9L625.7 282.8L628.0 284.1L635.5 271.2Z"/><text x="496" y="288" font-size="33.3" textLength="190" lengthAdjust="spacingAndGlyphs" xml:space="preserve" style="white-space:pre">KL-4 300 600</text><text x="425" y="322" font-size="30.3" textLength="62" lengthAdjust="spacingAndGlyphs" xml:space="preserve" style="white-space:pre">5C16</text><text x="496" y="319" font-size="31.8" textLength="156" lengthAdjust="spacingAndGlyphs" xml:space="preserve" style="white-space:pre">C8@150/200</text><text x="661" y="319" font-size="31.8" textLength="35" lengthAdjust="spacingAndGlyphs" xml:space="preserve" style="white-space:pre">(2)</text><text x="560" y="322" font-size="30.3" textLength="60" lengthAdjust="spacingAndGlyphs" xml:space="preserve" style="white-space:pre">5C16</text><text x="716" y="322" font-size="30.3" textLength="63" lengthAdjust="spacingAndGlyphs" xml:space="preserve" style="white-space:pre">5C16</text><text x="722" y="322" font-size="30.3" textLength="58" lengthAdjust="spacingAndGlyphs" xml:space="preserve" style="white-space:pre">4C16</text><text x="821" y="322" font-size="30.3" textLength="63" lengthAdjust="spacingAndGlyphs" xml:space="preserve" style="white-space:pre">5C16</text><text x="980" y="322" font-size="30.3" textLength="62" lengthAdjust="spacingAndGlyphs" xml:space="preserve" style="white-space:pre">5C16</text><text x="1111" y="322" font-size="30.3" textLength="63" lengthAdjust="spacingAndGlyphs" xml:space="preserve" style="white-space:pre">5C16</text><text x="491" y="368" font-size="30.3" textLength="62" lengthAdjust="spacingAndGlyphs" xml:space="preserve" style="white-space:pre">4C18</text><text x="768" y="368" font-size="30.3" textLength="63" lengthAdjust="spacingAndGlyphs" xml:space="preserve" style="white-space:pre">4C16</text><path d="M401.3 390.9L416.0 390.9L416.0 388.1L401.3 388.1ZM403.8 383.8L411.2 396.5L413.5 395.2L406.2 382.5ZM411.2 382.5L403.8 395.2L406.2 396.5L413.5 383.8Z"/><text x="354" y="400" font-size="31.8" textLength="125" lengthAdjust="spacingAndGlyphs" xml:space="preserve" style="white-space:pre">300 1350</text><text x="496" y="400" font-size="31.8" textLength="125" lengthAdjust="spacingAndGlyphs" xml:space="preserve" style="white-space:pre">GC12@200</text><path d="M679.0 390.9L693.5 390.9L693.5 388.1L679.0 388.1ZM681.4 383.9L688.7 396.5L691.1 395.1L683.8 382.5ZM688.7 382.5L681.4 395.1L683.8 396.5L691.1 383.9Z"/><text x="632" y="400" font-size="31.8" textLength="124" lengthAdjust="spacingAndGlyphs" xml:space="preserve" style="white-space:pre">300 1350</text><text x="775" y="400" font-size="31.8" textLength="125" lengthAdjust="spacingAndGlyphs" xml:space="preserve" style="white-space:pre">GC12@200</text></g></defs><use href="#ctx" fill="#fff" stroke="#000" stroke-width="0.45" clip-path="url(#cpO)"/><use href="#ctx" fill="#f5850a" clip-path="url(#cpB)"/><use href="#ctx" fill="#80ff00" clip-path="url(#cpP)"/><rect x="403" y="376" width="10" height="26" fill="#b4b4b4"/><rect x="414" y="376" width="9" height="26" fill="#b4b4b4"/><use href="#ctx" fill="#505050" clip-path="url(#cpC)"/></svg>
<div class="a" style="left:218px;top:475px;width:210px;height:26px;background:linear-gradient(#fdfdfd,#f1f1f1);border-radius:3px"></div>
<div class="a" style="left:221px;top:480px;width:2px;height:16px;background:repeating-linear-gradient(#a8a8a8 0 2px,transparent 2px 4px)"></div>
<div class="a" style="left:276px;top:477px;width:75px;height:22px;background:#dce9f8;border:1px solid #3c8fe0"></div>
<svg class="a" style="left:228px;top:478px" width="16" height="18" viewBox="0 0 16 18"><path d="M0 4.5H15" stroke="#dca0a0" stroke-width="2.6"/><path d="M3.5 1V18" stroke="#dca0a0" stroke-width="2.6"/><path d="M7.5 7.5L13 12L11 13.5L9 12.5Z" fill="#e8eef8" stroke="#7080a0" stroke-width="0.9"/><path d="M11.5 12.5L15 16" stroke="#506080" stroke-width="1.5"/></svg>
<span class="t" style="left:249px;top:481px;"><i style="width:24px">正交</i></span>
<svg class="a" style="left:279px;top:480px" width="16" height="16" viewBox="0 0 16 16"><path d="M2.5 0V16M13.5 0V16" stroke="#902020" stroke-width="1.3"/><path d="M0.5 8H4.5M11.5 8H15.5" stroke="#902020" stroke-width="1.3"/><path d="M5 9Q4 7.5 5.5 7L7 8.5L10 7Q13 7 13.5 10Q14 14 10.5 15H7.5Q5.5 13 5 9Z" fill="#e0b850" stroke="#907020" stroke-width="0.8"/><path d="M10 12L13.5 15.5" stroke="#d8d0c0" stroke-width="2"/></svg>
<span class="t" style="left:297px;top:481px;"><i style="width:48px">对象捕捉</i></span>
<svg class="a" style="left:354px;top:480px" width="16" height="16" viewBox="0 0 16 16"><path d="M1 2.5H15M1 6.5H15" stroke="#a03030" stroke-width="1.1"/><path d="M1.5 0.5V8.5M14.5 0.5V8.5" stroke="#a03030" stroke-width="1.1"/><rect x="3" y="8.5" width="11.5" height="7" fill="#fff" stroke="#101010" stroke-width="1.3"/><path d="M6 10.5V14M5 11L6 10.5M8.5 11Q10 9.5 11 11Q11 12 8.5 14H11.5" stroke="#101010" stroke-width="1" fill="none"/></svg>
<span class="t" style="left:374px;top:481px;"><i style="width:48px">动态输入</i></span>
<div class="a" style="left:430px;top:475px;width:264px;height:26px;background:linear-gradient(#fdfdfd,#f1f1f1);border-radius:3px"></div>
<div class="a" style="left:433px;top:480px;width:2px;height:16px;background:repeating-linear-gradient(#a8a8a8 0 2px,transparent 2px 4px)"></div>
<div class="a" style="left:488px;top:477px;width:51px;height:22px;background:#dce9f8;border:1px solid #3c8fe0"></div>
<div class="a" style="left:538px;top:477px;width:51px;height:22px;background:#dce9f8;border:1px solid #3c8fe0"></div>
<svg class="a" style="left:440px;top:480px" width="16" height="16" viewBox="0 0 16 16"><path d="M1 1L14 14M14 1L1 14" stroke="#2468d8" stroke-width="1.3"/><rect x="5.5" y="5.5" width="4" height="4" fill="#102070"/></svg>
<span class="t" style="left:460px;top:481px;"><i style="width:24px">交点</i></span>
<svg class="a" style="left:490px;top:480px" width="16" height="16" viewBox="0 0 16 16"><path d="M0 11.5H16" stroke="#2468d8" stroke-width="1.3"/><path d="M12.5 0V15" stroke="#2468d8" stroke-width="1.3"/><rect x="11" y="10" width="3" height="3" fill="#102070"/></svg>
<span class="t" style="left:510px;top:481px;"><i style="width:24px">垂点</i></span>
<svg class="a" style="left:540px;top:480px" width="16" height="16" viewBox="0 0 16 16"><path d="M0.5 7.5H15.5" stroke="#78a8e8" stroke-width="1.4"/><rect x="6.5" y="5.5" width="4" height="4" fill="#102080"/></svg>
<span class="t" style="left:562px;top:481px;"><i style="width:24px">中点</i></span>
<svg class="a" style="left:592px;top:480px" width="16" height="16" viewBox="0 0 16 16"><path d="M8 1L15 6.5L12.3 14.5H3.7L1 6.5Z" fill="#fff" stroke="#2468d8" stroke-width="1.3"/><circle cx="8" cy="1.2" r="1" fill="#2468d8"/><circle cx="15" cy="6.5" r="1" fill="#2468d8"/><circle cx="1" cy="6.5" r="1" fill="#2468d8"/><circle cx="3.7" cy="14.5" r="1" fill="#2468d8"/><circle cx="12.3" cy="14.5" r="1" fill="#2468d8"/></svg>
<span class="t" style="left:614px;top:481px;"><i style="width:24px">顶点</i></span>
<svg class="a" style="left:642px;top:480px" width="16" height="16" viewBox="0 0 16 16"><path d="M4.5 3V14H15" stroke="#2468d8" stroke-width="1.1" fill="none" stroke-dasharray="1.5 1"/><path d="M4.5 14L10 8.5L13.5 11" stroke="#2468d8" stroke-width="1.1" fill="none"/><path d="M10 8.5V14" stroke="#2468d8" stroke-width="1" stroke-dasharray="1 1"/><circle cx="4.5" cy="1.5" r="1.2" fill="none" stroke="#203060" stroke-width="0.8"/><path d="M12 0.5L14.5 3M14.5 0.5L12 3" stroke="#203060" stroke-width="0.8"/><path d="M0.5 5L1.5 6.2L2.5 5M1.5 6.2V7.5" stroke="#203060" stroke-width="0.8" fill="none"/><circle cx="1.5" cy="13" r="1.2" fill="none" stroke="#203060" stroke-width="0.8"/></svg>
<span class="t" style="left:663px;top:481px;"><i style="width:24px">坐标</i></span>
<div class="a" style="left:695px;top:475px;width:409px;height:26px;background:linear-gradient(#fdfdfd,#f1f1f1);border-radius:3px"></div>
<div class="a" style="left:698px;top:480px;width:2px;height:16px;background:repeating-linear-gradient(#a8a8a8 0 2px,transparent 2px 4px)"></div>
<div class="a" style="left:702px;top:477px;width:57px;height:22px;background:#fff"></div>
<div class="a" style="left:747px;top:477px;width:12px;height:22px;background:#f4f5f6"></div>
<span class="t" style="left:705px;top:481px;"><i style="width:36px">不偏移</i></span>
<svg class="a" style="left:750px;top:487px" width="7" height="4" viewBox="0 0 7 4"><path d="M0.5 0H6.5L3.5 3.5Z" fill="#000"/></svg>
<div class="a" style="left:764px;top:479px;width:1px;height:18px;background:#a0a0a0"></div>
<span class="t" style="left:767px;top:481px;color:#808080;font-size:13px">X=</span>
<div class="a" style="left:786px;top:477px;width:58px;height:22px;background:#f4f4f4;border:1px solid #7a7a7a"></div>
<span class="t" style="left:819px;top:481px;color:#808080;font-size:13px">0</span>
<svg class="a" style="left:833px;top:480px" width="7" height="16" viewBox="0 0 7 16"><path d="M0.5 4L3.5 0.5L6.5 4Z M0.5 12L3.5 15.5L6.5 12Z" fill="#404040"/></svg>
<span class="t" style="left:846px;top:481px;color:#808080;font-size:13px">mm</span>
<span class="t" style="left:872px;top:481px;color:#808080;font-size:13px">Y=</span>
<div class="a" style="left:890px;top:477px;width:58px;height:22px;background:#f4f4f4;border:1px solid #7a7a7a"></div>
<span class="t" style="left:923px;top:481px;color:#808080;font-size:13px">0</span>
<svg class="a" style="left:937px;top:480px" width="7" height="16" viewBox="0 0 7 16"><path d="M0.5 4L3.5 0.5L6.5 4Z M0.5 12L3.5 15.5L6.5 12Z" fill="#404040"/></svg>
<span class="t" style="left:950px;top:481px;color:#808080;font-size:13px">mm</span>
<div class="a" style="left:975px;top:479px;width:1px;height:18px;background:#a0a0a0"></div>
<div class="a" style="left:979px;top:483px;width:11px;height:11px;background:#f8f8f8;border:1px solid #808080"></div>
<span class="t" style="left:999px;top:481px;"><i style="width:24px">旋转</i></span>
<div class="a" style="left:1027px;top:477px;width:68px;height:22px;background:#f4f4f4;border:1px solid #7a7a7a"></div>
<span class="t" style="left:1044px;top:481px;color:#808080;font-size:13px">0.000</span>
<svg class="a" style="left:1084px;top:480px" width="7" height="16" viewBox="0 0 7 16"><path d="M0.5 4L3.5 0.5L6.5 4Z M0.5 12L3.5 15.5L6.5 12Z" fill="#404040"/></svg>
<span class="t" style="left:1098px;top:478px;color:#606060;font-size:13px">°</span>
<svg class="a" style="left:218px;top:506px" width="10" height="11" viewBox="0 0 10 11"><rect x="0.5" y="0.5" width="9" height="10" rx="1" fill="#e8a090" stroke="#502030"/><path d="M0.5 0.5L5 5.5L9.5 0.5M0.5 10.5L5 5.5L9.5 10.5" stroke="#502030" stroke-width="0.8" fill="none"/><path d="M2.5 2.5L7.5 8.5M7.5 2.5L2.5 8.5" stroke="#fff" stroke-width="1.6"/></svg>
<div class="a" style="left:219px;top:520px;width:7px;height:182px;background:radial-gradient(circle at 1px 1px,#b0b0b0 0.9px,transparent 1.1px) 0 0/4px 4px"></div>
<div class="a" style="left:229px;top:506px;width:1137px;height:28px;background:linear-gradient(#fafafb,#f0f0f2)"></div>
<svg class="a" style="left:234px;top:512px" width="16" height="16" viewBox="0 0 16 16"><path d="M0.5 0.5H6L8.5 3V10.5H0.5Z" fill="#e8f0fc" stroke="#7088b8" stroke-width="0.9"/><path d="M2 4H7M2 6H7M2 8H7" stroke="#78a0e0" stroke-width="0.9"/><path d="M6 4.5H12L15 7.5V15.5H6Z" fill="#f0f6ff" stroke="#1848b0" stroke-width="1.1"/><path d="M12 4.5V7.5H15" fill="#1848b0" stroke="#1848b0" stroke-width="0.8"/><path d="M7.5 9H13.5M7.5 11H13.5M7.5 13H13.5" stroke="#2868d8" stroke-width="1"/></svg>
<span class="t" style="left:253px;top:512px;"><i style="width:60px">复制跨数据</i></span>
<svg class="a" style="left:321px;top:512px" width="16" height="16" viewBox="0 0 16 16"><rect x="1" y="2.5" width="11" height="12" fill="#d4d4d4" stroke="#bcbcbc"/><rect x="4" y="0.5" width="5" height="3.5" fill="#c0c0c0"/><path d="M6.5 6.5H12L15 9.5V15.5H6.5Z" fill="#f0f0f0" stroke="#c0c0c0" stroke-width="1"/><path d="M8 11H13M8 13H13" stroke="#c8c8c8" stroke-width="1"/></svg>
<span class="t" style="left:341px;top:512px;color:#9a9a9a"><i style="width:60px">粘贴跨数据</i></span>
<span class="t" style="left:410px;top:512px;"><i style="width:84px">输入当前列数据</i></span>
<span class="t" style="left:504px;top:512px;"><i style="width:84px">删除当前列数据</i></span>
<span class="t" style="left:598px;top:512px;"><i style="width:48px">页面设置</i></span>
<span class="t" style="left:656px;top:512px;"><i style="width:60px">调换起始跨</i></span>
<span class="t" style="left:726px;top:512px;"><i style="width:72px">悬臂钢筋代号</i></span>
<div class="a" style="left:229px;top:533px;width:1136px;height:169px;background:#fff;border-left:1px solid #a0a0a0;border-top:1px solid #a0a0a0"></div>
<div class="a" style="left:1364px;top:534px;width:1px;height:168px;background:#a0a0a0"></div>
<div class="a" style="left:230px;top:534px;width:1134px;height:38px;background:linear-gradient(#fdfdfd,#f0f0f0)"></div>
<div class="a" style="left:230px;top:572px;width:1134px;height:1px;background:#c0c0c0"></div>
<div class="a" style="left:302px;top:554px;width:469px;height:1px;background:#c0c0c0"></div>
<div class="a" style="left:852px;top:554px;width:512px;height:1px;background:#c0c0c0"></div>
<div class="a" style="left:261px;top:534px;width:1px;height:38px;background:#c0c0c0"></div>
<div class="a" style="left:302px;top:534px;width:1px;height:38px;background:#c0c0c0"></div>
<div class="a" style="left:424px;top:534px;width:1px;height:38px;background:#c0c0c0"></div>
<div class="a" style="left:771px;top:534px;width:1px;height:38px;background:#c0c0c0"></div>
<div class="a" style="left:852px;top:534px;width:1px;height:38px;background:#c0c0c0"></div>
<div class="a" style="left:1095px;top:534px;width:1px;height:38px;background:#c0c0c0"></div>
<div class="a" style="left:1257px;top:534px;width:1px;height:38px;background:#c0c0c0"></div>
<div class="a" style="left:363px;top:554px;width:1px;height:18px;background:#c0c0c0"></div>
<div class="a" style="left:465px;top:554px;width:1px;height:18px;background:#c0c0c0"></div>
<div class="a" style="left:506px;top:554px;width:1px;height:18px;background:#c0c0c0"></div>
<div class="a" style="left:547px;top:554px;width:1px;height:18px;background:#c0c0c0"></div>
<div class="a" style="left:588px;top:554px;width:1px;height:18px;background:#c0c0c0"></div>
<div class="a" style="left:629px;top:554px;width:1px;height:18px;background:#c0c0c0"></div>
<div class="a" style="left:690px;top:554px;width:1px;height:18px;background:#c0c0c0"></div>
<div class="a" style="left:933px;top:554px;width:1px;height:18px;background:#c0c0c0"></div>
<div class="a" style="left:1014px;top:554px;width:1px;height:18px;background:#c0c0c0"></div>
<div class="a" style="left:1176px;top:554px;width:1px;height:18px;background:#c0c0c0"></div>
<div class="a" style="left:1338px;top:554px;width:1px;height:18px;background:#c0c0c0"></div>
<div class="a" style="left:364px;top:555px;width:60px;height:17px;background:linear-gradient(#fbe0b0,#f6c478)"></div>
<div class="a" style="left:262px;top:573px;width:1102px;height:18px;background:#a8cbf0"></div>
<div class="a" style="left:230px;top:573px;width:31px;height:18px;background:#fcd48c"></div>
<div class="a" style="left:230px;top:592px;width:31px;height:18px;background:#f4f4f4"></div>
<div class="a" style="left:230px;top:611px;width:31px;height:18px;background:#f4f4f4"></div>
<div class="a" style="left:230px;top:591px;width:1134px;height:1px;background:#c0c0c0"></div>
<div class="a" style="left:230px;top:610px;width:1134px;height:1px;background:#c0c0c0"></div>
<div class="a" style="left:230px;top:629px;width:1134px;height:1px;background:#c0c0c0"></div>
<div class="a" style="left:261px;top:573px;width:1px;height:56px;background:#c0c0c0"></div>
<div class="a" style="left:302px;top:573px;width:1px;height:56px;background:#c0c0c0"></div>
<div class="a" style="left:363px;top:573px;width:1px;height:56px;background:#c0c0c0"></div>
<div class="a" style="left:424px;top:573px;width:1px;height:56px;background:#c0c0c0"></div>
<div class="a" style="left:465px;top:573px;width:1px;height:56px;background:#c0c0c0"></div>
<div class="a" style="left:506px;top:573px;width:1px;height:56px;background:#c0c0c0"></div>
<div class="a" style="left:547px;top:573px;width:1px;height:56px;background:#c0c0c0"></div>
<div class="a" style="left:588px;top:573px;width:1px;height:56px;background:#c0c0c0"></div>
<div class="a" style="left:629px;top:573px;width:1px;height:56px;background:#c0c0c0"></div>
<div class="a" style="left:690px;top:573px;width:1px;height:56px;background:#c0c0c0"></div>
<div class="a" style="left:771px;top:573px;width:1px;height:56px;background:#c0c0c0"></div>
<div class="a" style="left:852px;top:573px;width:1px;height:56px;background:#c0c0c0"></div>
<div class="a" style="left:933px;top:573px;width:1px;height:56px;background:#c0c0c0"></div>
<div class="a" style="left:1014px;top:573px;width:1px;height:56px;background:#c0c0c0"></div>
<div class="a" style="left:1095px;top:573px;width:1px;height:56px;background:#c0c0c0"></div>
<div class="a" style="left:1176px;top:573px;width:1px;height:56px;background:#c0c0c0"></div>
<div class="a" style="left:1257px;top:573px;width:1px;height:56px;background:#c0c0c0"></div>
<div class="a" style="left:1338px;top:573px;width:1px;height:56px;background:#c0c0c0"></div>
<div class="a" style="left:302px;top:573px;width:1px;height:56px;background:#303030"></div>
<div class="a" style="left:363px;top:572px;width:62px;height:20px;border:2px solid #5a6068"></div>
<div class="a" style="left:424px;top:590px;width:4px;height:4px;background:#5a6068"></div>
<span class="s" style="left:261px;top:546px;width:41px;text-align:center;color:#000"><i style="width:24px">跨号</i></span>
<span class="s" style="left:302px;top:537px;width:122px;text-align:center;color:#000"><i style="width:24px">标高</i><b>(m)</b></span>
<span class="s" style="left:302px;top:556px;width:61px;text-align:center;color:#000"><i style="width:48px">起点标高</i></span>
<span class="s" style="left:363px;top:556px;width:61px;text-align:center;color:#a02080"><i style="width:48px">终点标高</i></span>
<span class="s" style="left:424px;top:537px;width:347px;text-align:center;color:#000"><i style="width:48px">构件尺寸</i><b>(mm)</b></span>
<span class="s" style="left:424px;top:556px;width:41px;text-align:center;color:#000"><b>A1</b></span>
<span class="s" style="left:465px;top:556px;width:41px;text-align:center;color:#000"><b>A2</b></span>
<span class="s" style="left:506px;top:556px;width:41px;text-align:center;color:#000"><b>A3</b></span>
<span class="s" style="left:547px;top:556px;width:41px;text-align:center;color:#000"><b>A4</b></span>
<span class="s" style="left:588px;top:556px;width:41px;text-align:center;color:#000"><i style="width:24px">跨长</i></span>
<span class="s" style="left:629px;top:556px;width:61px;text-align:center;color:#000"><i style="width:24px">截面</i><b>(B*H)</b></span>
<span class="s" style="left:690px;top:556px;width:81px;text-align:center;color:#000"><i style="width:72px">距左边线距离</i></span>
<span class="s" style="left:771px;top:546px;width:81px;text-align:center;color:#000"><i style="width:48px">上通长筋</i></span>
<span class="s" style="left:852px;top:537px;width:243px;text-align:center;color:#000"><i style="width:48px">上部钢筋</i></span>
<span class="s" style="left:852px;top:556px;width:81px;text-align:center;color:#000"><i style="width:60px">左支座钢筋</i></span>
<span class="s" style="left:933px;top:556px;width:81px;text-align:center;color:#000"><i style="width:48px">跨中钢筋</i></span>
<span class="s" style="left:1014px;top:556px;width:81px;text-align:center;color:#000"><i style="width:60px">右支座钢筋</i></span>
<span class="s" style="left:1095px;top:537px;width:162px;text-align:center;color:#000"><i style="width:48px">下部钢筋</i></span>
<span class="s" style="left:1095px;top:556px;width:81px;text-align:center;color:#000"><i style="width:48px">下通长筋</i></span>
<span class="s" style="left:1176px;top:556px;width:81px;text-align:center;color:#000"><i style="width:48px">下部钢筋</i></span>
<span class="s" style="left:1257px;top:556px;width:81px;text-align:center;color:#000"><i style="width:60px">侧面通长筋</i></span>
<span class="s" style="left:1342px;top:556px;width:22px;overflow:hidden"><i style="width:24px">侧面</i></span>
<span class="s" style="left:1359px;top:537px;width:5px;overflow:hidden"><i style="width:12px">侧</i></span>
<span class="m" style="left:241px;top:574px;">1</span>
<span class="m" style="left:264px;top:574px;">1</span>
<span class="m" style="left:305px;top:574px;">23.15</span>
<span class="m" style="left:366px;top:574px;">23.1</span>
<span class="m" style="left:432px;top:574px;">125)</span>
<span class="m" style="left:468px;top:574px;">(125)</span>
<span class="m" style="left:509px;top:574px;">(450)</span>
<span class="m" style="left:591px;top:574px;">(3300)</span>
<span class="m" style="left:632px;top:574px;">300*1350</span>
<span class="m" style="left:693px;top:574px;">(150)</span>
<span class="m" style="left:774px;top:574px;">4<span style="font-family:'Liberation Sans',sans-serif;font-size:12px;letter-spacing:0">&#8201;&#934;</span>16</span>
<span class="m" style="left:855px;top:574px;">5<span style="font-family:'Liberation Sans',sans-serif;font-size:12px;letter-spacing:0">&#8201;&#934;</span>16</span>
<span class="m" style="left:1017px;top:574px;">5<span style="font-family:'Liberation Sans',sans-serif;font-size:12px;letter-spacing:0">&#8201;&#934;</span>16</span>
<span class="m" style="left:1179px;top:574px;">4<span style="font-family:'Liberation Sans',sans-serif;font-size:12px;letter-spacing:0">&#8201;&#934;</span>18</span>
<span class="m" style="left:1341px;top:574px;">G<span style="font-family:'Liberation Sans',sans-serif;font-size:12px;letter-spacing:0">&#8201;&#934;</span>1</span>
<span class="m" style="left:241px;top:593px;">2</span>
<span class="m" style="left:264px;top:593px;">2</span>
<span class="m" style="left:305px;top:593px;">23.1</span>
<span class="m" style="left:366px;top:593px;">23.1</span>
<span class="m" style="left:468px;top:593px;">(450)</span>
<span class="m" style="left:509px;top:593px;">(450)</span>
<span class="m" style="left:591px;top:593px;">(3300)</span>
<span class="m" style="left:632px;top:593px;">300*1350</span>
<span class="m" style="left:693px;top:593px;">(150)</span>
<span class="m" style="left:855px;top:593px;">5<span style="font-family:'Liberation Sans',sans-serif;font-size:12px;letter-spacing:0">&#8201;&#934;</span>16</span>
<span class="m" style="left:1017px;top:593px;">5<span style="font-family:'Liberation Sans',sans-serif;font-size:12px;letter-spacing:0">&#8201;&#934;</span>16</span>
<span class="m" style="left:1179px;top:593px;">4<span style="font-family:'Liberation Sans',sans-serif;font-size:12px;letter-spacing:0">&#8201;&#934;</span>16</span>
<span class="m" style="left:1341px;top:593px;">G<span style="font-family:'Liberation Sans',sans-serif;font-size:12px;letter-spacing:0">&#8201;&#934;</span>1</span>
<span class="m" style="left:241px;top:612px;">3</span>
<span class="m" style="left:264px;top:612px;">3</span>
<span class="m" style="left:305px;top:612px;">23.15</span>
<span class="m" style="left:366px;top:612px;">23.15</span>
<span class="m" style="left:468px;top:612px;">(450)</span>
<span class="m" style="left:509px;top:612px;">(125)</span>
<span class="m" style="left:550px;top:612px;">(125)</span>
<span class="m" style="left:591px;top:612px;">(3300)</span>
<span class="m" style="left:632px;top:612px;">(300*600)</span>
<span class="m" style="left:693px;top:612px;">(150)</span>
<span class="m" style="left:855px;top:612px;">5<span style="font-family:'Liberation Sans',sans-serif;font-size:12px;letter-spacing:0">&#8201;&#934;</span>16</span>
<span class="m" style="left:1017px;top:612px;">5<span style="font-family:'Liberation Sans',sans-serif;font-size:12px;letter-spacing:0">&#8201;&#934;</span>16</span>
<div class="a" style="left:229px;top:688px;width:1136px;height:15px;background:#f0f0f0"></div>
<div class="a" style="left:248px;top:688px;width:523px;height:15px;background:#cdcdcd"></div>
<svg class="a" style="left:234px;top:691px" width="7" height="9" viewBox="0 0 7 9"><path d="M5.5 0.5L1.5 4.5L5.5 8.5" stroke="#404040" stroke-width="1.8" fill="none"/></svg>
<svg class="a" style="left:1351px;top:691px" width="7" height="9" viewBox="0 0 7 9"><path d="M1.5 0.5L5.5 4.5L1.5 8.5" stroke="#404040" stroke-width="1.8" fill="none"/></svg>
<div class="a" style="left:0px;top:707px;width:1366px;height:21px;background:#f0f0f0"></div>
<div class="a" style="left:0px;top:708px;width:148px;height:19px;background:#f4f4f4;border:1px solid #d0d0d0;border-top-color:#a8a8a8;border-left-color:#a8a8a8"></div>
<div class="a" style="left:149px;top:708px;width:79px;height:19px;background:#f4f4f4;border:1px solid #d0d0d0;border-top-color:#a8a8a8;border-left-color:#a8a8a8"></div>
<div class="a" style="left:229px;top:708px;width:99px;height:19px;background:#f4f4f4;border:1px solid #d0d0d0;border-top-color:#a8a8a8;border-left-color:#a8a8a8"></div>
<div class="a" style="left:329px;top:708px;width:49px;height:19px;background:#f4f4f4;border:1px solid #d0d0d0;border-top-color:#a8a8a8;border-left-color:#a8a8a8"></div>
<div class="a" style="left:379px;top:708px;width:915px;height:19px;background:#f4f4f4;border:1px solid #d0d0d0;border-top-color:#a8a8a8;border-left-color:#a8a8a8"></div>
<div class="a" style="left:1295px;top:708px;width:69px;height:19px;background:#f4f4f4;border:1px solid #d0d0d0;border-top-color:#a8a8a8;border-left-color:#a8a8a8"></div>
<span class="s" style="left:3px;top:710px;"><b>X=18158 Y=-7976</b></span>
<span class="s" style="left:152px;top:710px;"><i style="width:24px">层高</i><b>:2.8m</b></span>
<span class="s" style="left:232px;top:710px;"><i style="width:36px">底标高</i><b>:20.35m</b></span>
<span class="s" style="left:332px;top:710px;"><b>1(1)</b></span>
<span class="s" style="left:382px;top:710px;"><i style="width:120px">按鼠标左键选择梁图元</i><b>,</b><i style="width:48px">按右键或</i><b>ESC</b><i style="width:24px">退出</i><b>;</b><i style="width:96px">可以通过回车键及</i><b>shift+"</b><i style="width:12px;text-align:center">→</i><i style="width:12px;text-align:center">←</i><i style="width:12px;text-align:center">↑</i><b>"</b><i style="width:228px">光标键在跨之间、上下输入框之间进行切换</i></span>
<span class="s" style="left:1298px;top:710px;"><b>64.1 FPS</b></span>
<div class="a" style="left:183px;top:495px;width:249px;height:164px;border:7px solid #ff0000"></div>
<div class="a" style="left:0px;top:728px;width:1366px;height:40px;background:#060c11"></div>
<div class="a" style="left:0px;top:728px;width:48px;height:40px;background:#000"></div>
<div class="a" style="left:1297px;top:728px;width:69px;height:40px;background:#000"></div>
<svg class="a" style="left:15px;top:739px" width="17" height="17" viewBox="0 0 17 17"><path d="M0 2.4L7 1.4V8H0ZM8 1.2L17 0V8H8ZM0 9H7V15.6L0 14.6ZM8 9H17V17L8 15.8Z" fill="#fff"/></svg>
<div class="a" style="left:48px;top:728px;width:344px;height:40px;background:#333436"></div>
<svg class="a" style="left:56px;top:737px" width="23" height="23" viewBox="0 0 23 23"><circle cx="11.5" cy="11" r="9" fill="none" stroke="#f4f4f4" stroke-width="2.6"/></svg>
<span class="t" style="left:84px;top:740px;color:#b4b4b4;font-size:14px"><i style="width:168px">在这里输入你要搜索的内容</i></span>
<svg class="a" style="left:365px;top:739px" width="12" height="18" viewBox="0 0 12 18"><rect x="3.5" y="0.5" width="5" height="11" rx="2.5" fill="none" stroke="#a8a8a8" stroke-width="1.1"/><path d="M1 8.5Q1 14 6 14Q11 14 11 8.5M6 14V17M3 17.5H9" stroke="#a8a8a8" stroke-width="1.1" fill="none"/></svg>
<svg class="a" style="left:405px;top:739px" width="21" height="18" viewBox="0 0 21 18"><rect x="4.5" y="3.5" width="12" height="12" fill="none" stroke="#fff" stroke-width="1.5"/><path d="M3 5H1V14H3M18 5H20V14H18" stroke="#fff" stroke-width="1.3" fill="none"/></svg>
<svg class="a" style="left:454px;top:736px" width="24" height="24" viewBox="0 0 24 24"><g fill="#e6e6e6"><path d="M11.5 11.5Q5 12.5 2.5 9.5Q0 5 3.5 2.5Q8 0 10.5 3Q12.5 6 11.5 11.5Z"/><path d="M12.5 11.5Q11.5 5 14.5 2.5Q19 0 21.5 3.5Q24 8 21 10.5Q18 12.5 12.5 11.5Z"/><path d="M12.5 12.5Q19 11.5 21.5 14.5Q24 19 20.5 21.5Q16 24 13.5 21Q11.5 18 12.5 12.5Z"/><path d="M11.5 12.5Q12.5 19 9.5 21.5Q5 24 2.5 20.5Q0 16 3 13.5Q6 11.5 11.5 12.5Z"/></g></svg>
<svg class="a" style="left:505px;top:736px" width="24" height="24" viewBox="0 0 24 24"><path d="M6.5 13H19Q19.5 6.5 13 6Q6.5 6.5 6.5 13Q6.5 20 13 20.5Q17 20.5 18.8 17H15.5Q14.5 18 13 18Q10 17.5 10 13.5" fill="none" stroke="#f0f0f0" stroke-width="3"/><path d="M2 20Q0 14 8 6Q16 -1 21 2.5" stroke="#e0e0e0" stroke-width="1.3" fill="none"/><path d="M3 22Q8 23 14 19" stroke="#e0e0e0" stroke-width="1.2" fill="none"/></svg>
<svg class="a" style="left:556px;top:736px" width="24" height="24" viewBox="0 0 24 24"><path d="M19 6Q14 1.5 8 4Q2 7 3.5 14Q5 21 13 20.5Q19 19.5 19.5 14Q19.5 9 14.5 8.5Q10 8.5 9.5 12.5Q9.5 16 13 16Q15.5 15.5 15 13" fill="none" stroke="#e8e8e8" stroke-width="1.5"/><path d="M19 6L21.5 3.5" stroke="#e8e8e8" stroke-width="1.5"/></svg>
<svg class="a" style="left:609px;top:737px" width="24" height="24" viewBox="0 0 24 24"><path d="M2 11Q3 2.5 12 2.5Q21 2.5 21 12V14H8Q8.5 18.5 13.5 18.5Q17 18.5 20 17V21Q17 22.5 13 22.5Q3.5 22 3.5 13Q3.5 8 8 6.5Q4 7.5 2 11ZM8 10.5H15.5Q15.5 6.5 12 6.5Q8.5 6.5 8 10.5Z" fill="#0a78d8"/></svg>
<svg class="a" style="left:658px;top:736px" width="26" height="24" viewBox="0 0 26 24"><path d="M5 12.5Q5 4.5 13.5 4.5Q22 4.5 22 13V14.5H9.5Q10 18.5 14 18.5Q17 18.5 18 16.5H21.8Q20 22 14 22Q5 22 5 12.5ZM9.5 11.5H17.5Q17 8 13.5 8Q10 8 9.5 11.5Z" fill="#48b0f0"/><path d="M2 22Q-1 16 8 8Q17 0 24 3" stroke="#f0c820" stroke-width="2" fill="none"/></svg>
<svg class="a" style="left:707px;top:737px" width="24" height="24" viewBox="0 0 24 24"><path d="M1 4Q1 3 2 3H9L11 5.5H22Q23 5.5 23 6.5V20H1Z" fill="#f8d060"/><path d="M1 9H23V20Q23 21 22 21H2Q1 21 1 20Z" fill="#fce088"/><path d="M6 21V15H18V21H15V18H9V21Z" fill="#2a90e0"/></svg>
<svg class="a" style="left:755px;top:735px" width="26" height="26" viewBox="0 0 26 26"><path d="M21 5Q24 2 24 1Q20 4 17 3Q9 1.5 4 8Q-1 16 6 22Q12 26 19 22Q26 16 20.5 10.5Q17 8 13 9.5Q9 11.5 10 15.5Q11.5 19 15.5 18Q18 16.5 16.5 14Q15 12.5 13.5 14Q14.5 16 15.5 15" fill="none" stroke="#1e90f4" stroke-width="3.6"/></svg>
<svg class="a" style="left:805px;top:736px" width="24" height="24" viewBox="0 0 24 24"><circle cx="12" cy="12" r="10.5" fill="#f8fff8"/><path d="M5.5 12.5H18.5Q18.5 6 12 6Q5.5 6.5 5.5 12.5Q5.5 19 12 19.5Q16.5 19.5 18 16H14.5Q13.5 17 12 17Q9 16.5 9 12.5" fill="none" stroke="#40b828" stroke-width="2.8"/><path d="M1 21Q-1 15 8 7Q16 0 21 1.5" stroke="#40b828" stroke-width="1.6" fill="none"/></svg>
<div class="a" style="left:842px;top:728px;width:48px;height:40px;background:#343a3f"></div>
<svg class="a" style="left:854px;top:736px" width="24" height="24" viewBox="0 0 24 24"><rect x="0" y="0" width="24" height="23" rx="4.5" fill="#1a96f4"/><path d="M12 4.5V18.5M4.5 11.5H19.5" stroke="#fff" stroke-width="1.8" fill="none"/><circle cx="7.5" cy="9" r="2.6" fill="none" stroke="#fff" stroke-width="1.5"/><circle cx="16.5" cy="14" r="2.6" fill="none" stroke="#fff" stroke-width="1.5"/></svg>
<div class="a" style="left:748px;top:765px;width:40px;height:3px;background:#76b9ed"></div>
<div class="a" style="left:797px;top:765px;width:31px;height:3px;background:#76b9ed"></div>
<div class="a" style="left:828px;top:765px;width:9px;height:3px;background:#5a8cb4"></div>
<div class="a" style="left:842px;top:765px;width:48px;height:3px;background:#76b9ed"></div>
<span class="t" style="left:947px;top:740px;color:#f0f0f0;font-size:12px"><i style="width:24px">链接</i></span>
<span class="t" style="left:1004px;top:731px;color:#fff;font-size:12.5px;letter-spacing:-0.01px">53%</span>
<span class="t" style="left:991.5px;top:749px;color:#fff;font-size:12px">CPU<i style="width:24px">使用</i></span>
<svg class="a" style="left:1059px;top:741px" width="14" height="14" viewBox="0 0 14 14"><path d="M1.5 9.5L7 4L12.5 9.5" stroke="#fff" stroke-width="1.4" fill="none"/></svg>
<svg class="a" style="left:1083px;top:740px" width="16" height="16" viewBox="0 0 16 16"><rect x="1" y="3.5" width="12.5" height="9" fill="none" stroke="#fff" stroke-width="1.2"/><rect x="14" y="6" width="1.5" height="4" fill="#fff"/><rect x="3" y="5.5" width="6" height="5" fill="#fff"/></svg>
<svg class="a" style="left:1108px;top:740px" width="16" height="16" viewBox="0 0 16 16"><path d="M1.5 14.5A11.5 11.5 0 0 1 13 3" stroke="#b8b8b8" stroke-width="1.3" fill="none"/><path d="M4.5 14.5A8.5 8.5 0 0 1 13 6" stroke="#d8d8d8" stroke-width="1.3" fill="none"/><path d="M7.5 14.5A5.5 5.5 0 0 1 13 9" stroke="#fff" stroke-width="1.3" fill="none"/><circle cx="12" cy="13.5" r="1.6" fill="#fff"/></svg>
<svg class="a" style="left:1129px;top:740px" width="18" height="16" viewBox="0 0 18 16"><path d="M1 6H4L8 2V14L4 10H1Z" fill="none" stroke="#fff" stroke-width="1.1"/><path d="M10 5.5Q11.5 8 10 10.5" stroke="#fff" stroke-width="1.1" fill="none"/><path d="M12 3.5Q14.5 8 12 12.5" stroke="#c0c0c0" stroke-width="1" fill="none"/><path d="M14.2 2Q17.5 8 14.2 14" stroke="#808080" stroke-width="1" fill="none"/></svg>
<svg class="a" style="left:1154px;top:739px" width="24" height="16" viewBox="0 0 24 16"><rect x="1" y="2.5" width="22" height="11.5" fill="none" stroke="#fff" stroke-width="1.2"/><path d="M3.5 5.5H20.5M3.5 8H20.5" stroke="#fff" stroke-width="1.2" stroke-dasharray="1.5 1"/><path d="M6 11H18" stroke="#fff" stroke-width="1.2"/></svg>
<span class="t" style="left:1186px;top:738px;color:#fff;font-size:18.5px;line-height:20px">A</span>
<svg class="a" style="left:1213px;top:739px" width="18" height="18" viewBox="0 0 18 18"><path d="M2.5 1.5L15 0L17 13L4.5 16.5Q1.5 17 1 14Z" fill="#f04818"/><path d="M13 4Q9 2.5 6.5 4.5Q5 6.5 9 8Q13 9.5 11.5 11.5Q9 13.5 5 11.5" stroke="#fff" stroke-width="2.2" fill="none"/></svg>
<span class="t" style="left:1261px;top:731px;color:#fff;font-size:12.5px;letter-spacing:-0.06px">21:32</span>
<span class="t" style="left:1247px;top:750px;color:#fff;font-size:12.5px;letter-spacing:0.27px">2018/7/14</span>
<svg class="a" style="left:1324px;top:738px" width="22" height="22" viewBox="0 0 22 22"><path d="M1.5 2.5H16.5V13H8L4.5 16V13H1.5Z" fill="#fff"/><path d="M4 5.5H14M4 8H14M4 10.5H11" stroke="#111" stroke-width="1"/><circle cx="15.5" cy="16" r="5.8" fill="#3a3a3a" stroke="#e0e0e0" stroke-width="0.9"/><path d="M14.3 14L15.8 13V19.3" stroke="#fff" stroke-width="1.3" fill="none"/></svg>
</body></html>
